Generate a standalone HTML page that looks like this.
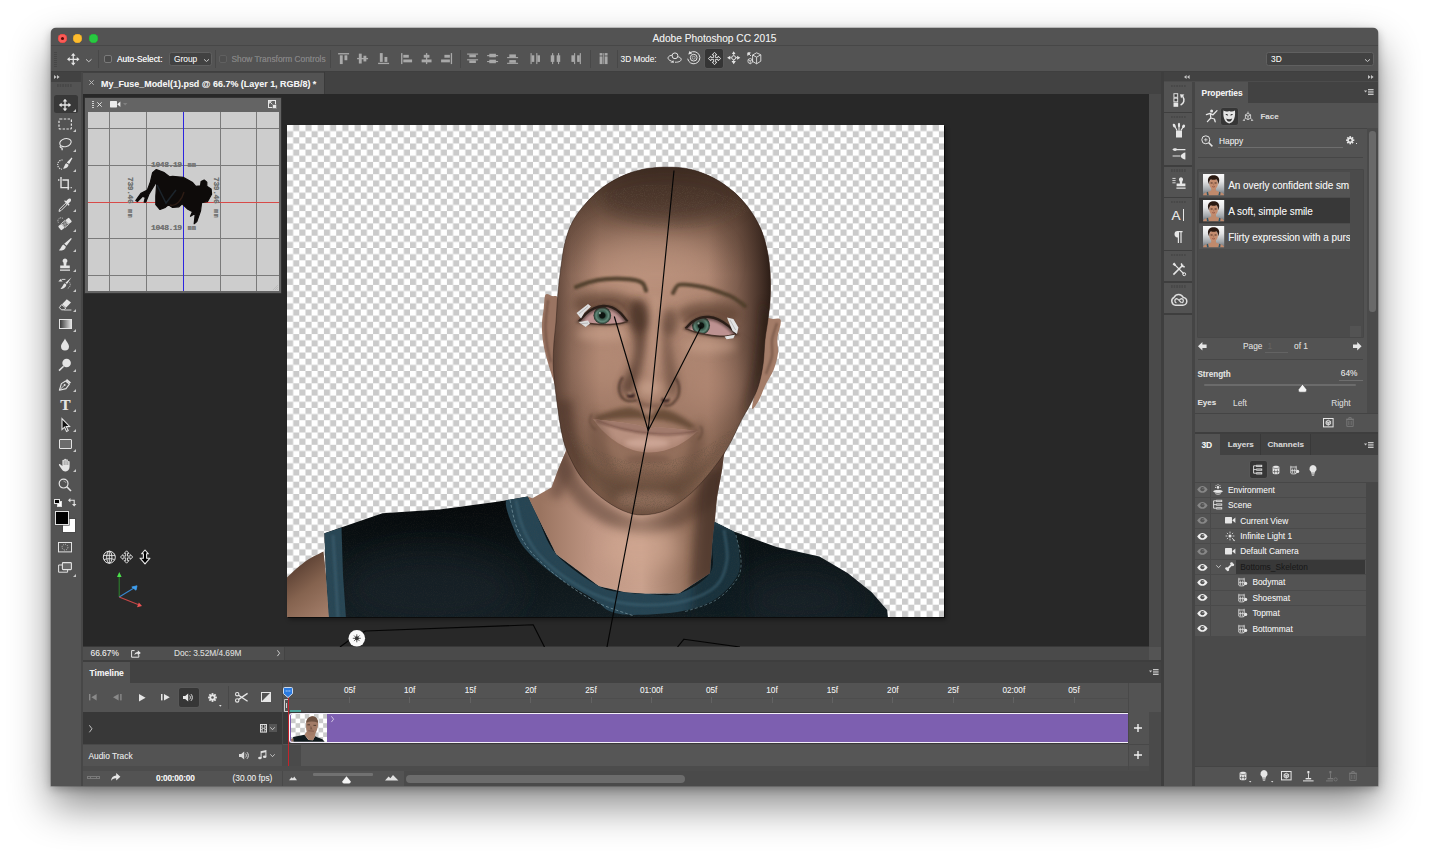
<!DOCTYPE html>
<html lang="en">
<head>
<meta charset="utf-8">
<title>Adobe Photoshop CC 2015</title>
<style>
*{box-sizing:border-box;margin:0;padding:0}
html,body{width:1429px;height:855px;overflow:hidden;background:#fff}
body{position:relative;font-family:"Liberation Sans","DejaVu Sans",sans-serif;font-size:8.5px;color:#e6e6e6}
.win *{position:absolute}
.win{position:absolute;left:51px;top:28px;width:1327px;height:758px;background:#535353;border-radius:5px 5px 0 0;box-shadow:0 20px 40px 0 rgba(0,0,0,.46),0 3px 10px 0 rgba(0,0,0,.28),0 0 0 .5px rgba(0,0,0,.35)}
.clip{left:0;top:0;width:1327px;height:758px;border-radius:5px 5px 0 0;overflow:hidden}
.s{left:-51px;top:-28px;width:1429px;height:855px}
.t{white-space:nowrap;line-height:10px;height:10px;text-shadow:0 0 .45px rgba(255,255,255,.4)}
.b{font-weight:bold}
.dim{color:#7d7d7d}
svg{overflow:visible}
.r{background:#c9c9c9}
.d{background:#383838}
.tl{width:9.4px;height:9.4px;border-radius:50%;top:33.8px}
.vd{width:1px;background:#484848;top:50px;height:18px}
</style>
</head>
<body>
<div class="win">
<div class="clip">
<div class="s">
<!-- TITLE -->
<div style="left:51px;top:28px;width:1327px;height:17px;background:#535353"></div>
<div class="tl" style="left:57.8px;background:#fc5b57;box-shadow:inset 0 0 0 .5px #e2463f"></div>
<div style="left:61px;top:37px;width:3px;height:3px;border-radius:50%;background:#5a0a08"></div>
<div class="tl" style="left:73px;background:#fdbc2e;box-shadow:inset 0 0 0 .5px #e0a123"></div>
<div class="tl" style="left:88.5px;background:#28c941;box-shadow:inset 0 0 0 .5px #1fb033"></div>
<div class="t" style="left:51px;width:1327px;text-align:center;top:34px;font-size:10.2px;color:#ececec">Adobe Photoshop CC 2015</div>
<!-- OPTIONS BAR -->
<div style="left:51px;top:45px;width:1327px;height:1px;background:#474747"></div>
<div id="opt">
<div style="left:54px;top:52px;width:3px;height:15px;background:repeating-linear-gradient(#474747 0 1px,#535353 1px 2px)"></div>
<svg style="left:66.95px;top:53.25px" width="12.5" height="12.5" viewBox="-6 -6 12 12"><g fill="none" stroke="#e6e6e6" stroke-width="1.2"><path d="M-4.6 0H4.6M0 -4.6V4.6"/></g><g fill="#e6e6e6"><path d="M0 -6L2.2 -3.4H-2.2ZM0 6L2.2 3.4H-2.2ZM-6 0L-3.4 -2.2V2.2ZM6 0L3.4 -2.2V2.2Z"/></g></svg>
<svg style="left:86.25px;top:58.925px" width="5.5" height="3.75" viewBox="0 0 5.5 3.75"><path d="M0 0.3L2.75 2.75L5.5 0.3" fill="none" stroke="#c8c8c8" stroke-width="1"/></svg>
<div class="vd" style="left:98px"></div>
<div style="left:104px;top:55px;width:8px;height:8px;border:1px solid #7a7a7a;border-radius:2px;background:#4a4a4a"></div>
<div class="t" style="left:117px;top:54px;font-size:8.35px;color:#f0f0f0;text-shadow:0 0 .3px #f0f0f0">Auto-Select:</div>
<div style="left:168.5px;top:52px;width:43px;height:14px;background:#424242;border:1px solid #606060;border-radius:2.5px"></div>
<div class="t" style="left:174px;top:54px;font-size:8.35px;color:#f0f0f0">Group</div>
<svg style="left:203.5px;top:58.55px" width="5" height="3.5" viewBox="0 0 5 3.5"><path d="M0 0.3L2.5 2.5L5 0.3" fill="none" stroke="#c8c8c8" stroke-width="1"/></svg>
<div class="vd" style="left:215px"></div>
<div style="left:218.5px;top:55px;width:8px;height:8px;border:1px solid #606060;border-radius:2px;background:#4f4f4f"></div>
<div class="t" style="left:231.5px;top:54px;font-size:8.35px;color:#7c7c7c">Show Transform Controls</div>
<div class="vd" style="left:330px"></div>
<svg style="left:337.4px;top:52.0px" width="13.200000000000001" height="13.200000000000001" viewBox="-6.0 -6.0 12 12" fill="#a9a9a9"><rect x="-5" y="-5" width="10" height="1.2"/><rect x="-3.4" y="-3" width="2.6" height="8"/><rect x="0.8" y="-3" width="2.6" height="4.5"/></svg>
<svg style="left:356.4px;top:52.0px" width="13.200000000000001" height="13.200000000000001" viewBox="-6.0 -6.0 12 12" fill="#a9a9a9"><rect x="-5" y="-0.6" width="10" height="1.2"/><rect x="-3.4" y="-4.5" width="2.6" height="9"/><rect x="0.8" y="-2.6" width="2.6" height="5.2"/></svg>
<svg style="left:376.9px;top:52.0px" width="13.200000000000001" height="13.200000000000001" viewBox="-6.0 -6.0 12 12" fill="#a9a9a9"><rect x="-5" y="3.8" width="10" height="1.2"/><rect x="-3.4" y="-5" width="2.6" height="8"/><rect x="0.8" y="-1.5" width="2.6" height="4.5"/></svg>
<svg style="left:400.4px;top:52.0px" width="13.200000000000001" height="13.200000000000001" viewBox="-6.0 -6.0 12 12" fill="#a9a9a9"><rect x="-5" y="-5" width="1.2" height="10"/><rect x="-3" y="-3.4" width="5" height="2.6"/><rect x="-3" y="0.8" width="8" height="2.6"/></svg>
<svg style="left:420.4px;top:52.0px" width="13.200000000000001" height="13.200000000000001" viewBox="-6.0 -6.0 12 12" fill="#a9a9a9"><rect x="-0.6" y="-5" width="1.2" height="10"/><rect x="-2.6" y="-3.4" width="5.2" height="2.6"/><rect x="-4.5" y="0.8" width="9" height="2.6"/></svg>
<svg style="left:440.4px;top:52.0px" width="13.200000000000001" height="13.200000000000001" viewBox="-6.0 -6.0 12 12" fill="#a9a9a9"><rect x="3.8" y="-5" width="1.2" height="10"/><rect x="-2" y="-3.4" width="5" height="2.6"/><rect x="-5" y="0.8" width="8" height="2.6"/></svg>
<div class="vd" style="left:460px"></div>
<svg style="left:466.4px;top:52.0px" width="13.200000000000001" height="13.200000000000001" viewBox="-6.0 -6.0 12 12" fill="#a9a9a9"><rect x="-5" y="-4.6" width="10" height="1"/><rect x="-3" y="-3.6" width="6" height="2.4"/><rect x="-5" y="0.6" width="10" height="1"/><rect x="-3" y="1.6" width="6" height="2.4"/></svg>
<svg style="left:486.4px;top:52.0px" width="13.200000000000001" height="13.200000000000001" viewBox="-6.0 -6.0 12 12" fill="#a9a9a9"><rect x="-5" y="-3.2" width="10" height="1"/><rect x="-3" y="-4.4" width="6" height="3.2"/><rect x="-5" y="2.2" width="10" height="1"/><rect x="-3" y="1" width="6" height="3.2"/></svg>
<svg style="left:506.4px;top:52.0px" width="13.200000000000001" height="13.200000000000001" viewBox="-6.0 -6.0 12 12" fill="#a9a9a9"><rect x="-5" y="-1.4" width="10" height="1"/><rect x="-3" y="-3.8" width="6" height="2.4"/><rect x="-5" y="3.8" width="10" height="1"/><rect x="-3" y="1.4" width="6" height="2.4"/></svg>
<svg style="left:529.4px;top:52.0px" width="13.200000000000001" height="13.200000000000001" viewBox="-6.0 -6.0 12 12" fill="#a9a9a9"><rect x="-4.6" y="-5" width="1" height="10"/><rect x="-3.6" y="-3" width="2.4" height="6"/><rect x="0.6" y="-5" width="1" height="10"/><rect x="1.6" y="-3" width="2.4" height="6"/></svg>
<svg style="left:549.4px;top:52.0px" width="13.200000000000001" height="13.200000000000001" viewBox="-6.0 -6.0 12 12" fill="#a9a9a9"><rect x="-3.2" y="-5" width="1" height="10"/><rect x="-4.4" y="-3" width="3.2" height="6"/><rect x="2.2" y="-5" width="1" height="10"/><rect x="1" y="-3" width="3.2" height="6"/></svg>
<svg style="left:569.4px;top:52.0px" width="13.200000000000001" height="13.200000000000001" viewBox="-6.0 -6.0 12 12" fill="#a9a9a9"><rect x="-1.4" y="-5" width="1" height="10"/><rect x="-3.8" y="-3" width="2.4" height="6"/><rect x="3.8" y="-5" width="1" height="10"/><rect x="1.4" y="-3" width="2.4" height="6"/></svg>
<div class="vd" style="left:590px"></div>
<svg style="left:597.4px;top:52.0px" width="13.200000000000001" height="13.200000000000001" viewBox="-6.0 -6.0 12 12" fill="#a9a9a9"><rect x="-3.6" y="-5" width="2.6" height="2.2"/><rect x="1" y="-5" width="2.6" height="2.2"/><rect x="-3.6" y="-2" width="2.6" height="7"/><rect x="1" y="-2" width="2.6" height="7"/><rect x="-0.5" y="-5" width="1" height="10" opacity=".7"/></svg>
<div class="vd" style="left:617px"></div>
<div class="t" style="left:620.5px;top:54px;font-size:8.35px;color:#f0f0f0">3D Mode:</div>
<svg style="left:666.5px;top:52px" width="15" height="12" viewBox="0 0 15 12" fill="none" stroke="#e2e2e2" stroke-width="1"><circle cx="8" cy="3.8" r="2.9"/><path d="M5.2 3.2C1.5 3.6 0.2 5.6 1.6 7.4C2.4 8.3 3.4 8.9 4.6 9.2M8 10.2C12 10.4 15 8.8 14 6.6C13.6 5.8 12.6 5.2 11.2 4.8"/><path d="M3.4 10.6L6.4 8.2L7 10.8Z" fill="#e2e2e2" stroke="none"/></svg>
<svg style="left:687px;top:51.3px" width="13.4" height="13.4" viewBox="-6.7 -6.7 13.4 13.4" fill="none" stroke="#e2e2e2" stroke-width="1"><circle r="3.4"/><circle r="1.5" stroke-width=".8" opacity=".7"/><path d="M-3.6 -4.9A6.1 6.1 0 1 1 -6 1"/><path d="M-5.4 -3.2L-4.2 -6.6L-1.6 -4.2Z" fill="#e2e2e2" stroke="none"/></svg>
<div style="left:705px;top:49px;width:18px;height:19px;background:#353535;border-radius:2px;box-shadow:0 0 0 .5px #5e5e5e"></div>
<svg style="left:707.5px;top:51.5px" width="13" height="13" viewBox="-6.5 -6.5 13 13" fill="none" stroke="#e2e2e2" stroke-width=".9" stroke-linejoin="round"><path d="M0 -6.2L2.4 -3.6H0.9V-0.9H3.6V-2.4L6.2 0L3.6 2.4V0.9H0.9V3.6H2.4L0 6.2L-2.4 3.6H-0.9V0.9H-3.6V2.4L-6.2 0L-3.6 -2.4V-0.9H-0.9V-3.6H-2.4Z"/></svg>
<svg style="left:727px;top:51.3px" width="13.4" height="13.4" viewBox="-6.7 -6.7 13.4 13.4" fill="#e2e2e2"><circle r="2" fill="none" stroke="#e2e2e2" stroke-width="1"/><path d="M0 -6.4L1.8 -3.6H-1.8ZM0 6.6L2.2 3.4H-2.2ZM-6.6 0L-3.4 -2V2ZM6.6 0L3.4 -2V2Z"/><path d="M0 -3.6V-2.2M0 3.4V2.2M-3.4 0H-2.2M3.4 0H2.2" stroke="#e2e2e2" stroke-width="1"/></svg>
<svg style="left:746.5px;top:51.5px" width="14.5" height="13" viewBox="0 0 14.5 13" fill="none" stroke="#e2e2e2" stroke-width=".9" stroke-linejoin="round"><path d="M9.6 0.8L13.8 2.8V9.2L9.6 11.8L5.6 9.4V3Z"/><path d="M5.6 3L9.6 5.2L13.8 2.8M9.6 5.2V11.8"/><path d="M1 7.6L3.2 6.4L5.4 7.6V10.4L3.2 11.8L1 10.4ZM1 7.6L3.2 8.8L5.4 7.6M3.2 8.8V11.8" stroke-width=".8"/><path d="M1.4 1.4L4 4M0.8 0.8H3.4L0.8 3.4Z" fill="#e2e2e2"/></svg>
<div style="left:1265.5px;top:52px;width:108px;height:14px;background:#424242;border:1px solid #606060;border-radius:2.5px"></div>
<div class="t" style="left:1271px;top:54px;font-size:8.35px;color:#f0f0f0">3D</div>
<svg style="left:1365.0px;top:58.55px" width="5" height="3.5" viewBox="0 0 5 3.5"><path d="M0 0.3L2.5 2.5L5 0.3" fill="none" stroke="#c8c8c8" stroke-width="1"/></svg>
</div>
<!-- TAB ROW / DOC -->
<div style="left:51px;top:71px;width:1327px;height:1px;background:#3f3f3f"></div>
<div style="left:51px;top:72px;width:1327px;height:714px;background:#383838"></div>
<div id="doc">
<div style="left:83px;top:72px;width:1079px;height:22px;background:#424242"></div>
<div style="left:83px;top:73px;width:241px;height:21px;background:#535353"></div>
<div style="left:83px;top:94px;width:1067px;height:552px;background:#282828"></div>
</div>
<!--TOOLS-->
<div id="tools">
<div style="left:51px;top:72px;width:29.5px;height:714px;background:#535353"></div>
<div style="left:80.5px;top:72px;width:2px;height:714px;background:#474747"></div>
<div style="left:51px;top:72px;width:29.5px;height:9.5px;background:#424242"></div>
<svg style="left:53.5px;top:74.5px" width="6" height="4" viewBox="0 0 6 4" fill="#c4c4c4"><path d="M0 0L2.6 2L0 4ZM3 0L5.6 2L3 4Z"/></svg>
<div style="left:57px;top:84px;width:15px;height:3px;background:linear-gradient(90deg,#484848 0 64%,transparent 64%) 0 0/2.6px 100%"></div>
<div style="left:54px;top:95px;width:23.5px;height:17.8px;background:#383838;border-radius:2.5px"></div>
<svg style="left:57.2px;top:96.5px" width="16" height="16" viewBox="-8.0 -8.0 16 16" fill="none" stroke="#e4e4e4" stroke-width="1.1" ><path d="M-4.6 0H4.6M0 -4.6V4.6" stroke-width="1.3"/><path d="M0 -6.2L2.3 -3.4H-2.3ZM0 6.2L2.3 3.4H-2.3ZM-6.2 0L-3.4 -2.3V2.3ZM6.2 0L3.4 -2.3V2.3Z" fill="#e4e4e4" stroke="none"/></svg>
<svg style="left:57.2px;top:115.7px" width="16" height="16" viewBox="-8.0 -8.0 16 16" fill="none" stroke="#e4e4e4" stroke-width="1.1" ><rect x="-6" y="-5" width="12.4" height="10" rx="1" stroke-dasharray="2.4 1.4" stroke-width="1.2"/></svg>
<svg style="left:57.2px;top:136.0px" width="16" height="16" viewBox="-8.0 -8.0 16 16" fill="none" stroke="#e4e4e4" stroke-width="1.1" ><ellipse cx="0.8" cy="-1.2" rx="5.8" ry="4" transform="rotate(-14)"/><path d="M-4.2 1.6C-5.4 2.4 -5 3.6 -3.6 3.8C-2.4 4 -2.6 5.2 -3.2 6.2" stroke-width="1.2"/></svg>
<svg style="left:57.2px;top:156.0px" width="16" height="16" viewBox="-8.0 -8.0 16 16" fill="none" stroke="#e4e4e4" stroke-width="1.1" ><path d="M0.2 -4.6A4.6 4.6 0 1 0 -0.4 4.6" stroke-dasharray="1.2 1" transform="translate(-2.6 0.6)"/><path d="M6.6 -6.6L7.4 -5.8L4.2 0L1.8 -1.6Z M3.6 0.8L1.2 -0.8C-0.4 0.2 -0.6 2.8 -2 4.6C0.8 5 3.4 3.4 3.6 0.8Z" fill="#e4e4e4" stroke="none"/></svg>
<svg style="left:57.2px;top:176.0px" width="16" height="16" viewBox="-8.0 -8.0 16 16" fill="none" stroke="#e4e4e4" stroke-width="1.1" ><path d="M-4 -7V3.6H4.2M-7 -4H-5.6M-2.6 -4H3.2V5.8M5.6 3.6H6.8" stroke-width="1.4"/></svg>
<svg style="left:57.2px;top:196.5px" width="16" height="16" viewBox="-8.0 -8.0 16 16" fill="none" stroke="#e4e4e4" stroke-width="1.1" ><path d="M-6 6.4L-5.4 4.2L0.4 -1.6L1.8 -0.2L-4 5.6Z" stroke-width="1"/><path d="M-0.6 -3.4L3.6 0.8L4.6 -0.2L3.4 -1.4L5.6 -3.6C6.4 -4.6 6.2 -5.6 5.6 -6.2C4.8 -6.8 3.8 -6.6 3.2 -6L1 -3.8L-0.2 -5Z" fill="#e4e4e4" stroke="none"/></svg>
<svg style="left:57.2px;top:216.0px" width="16" height="16" viewBox="-8.0 -8.0 16 16" fill="none" stroke="#e4e4e4" stroke-width="1.1" ><g transform="rotate(-40)"><rect x="-7" y="-2.6" width="4.2" height="5.2" rx="1" fill="#e4e4e4" stroke="none"/><rect x="2.8" y="-2.6" width="4.2" height="5.2" rx="1" fill="#e4e4e4" stroke="none"/><rect x="-2.4" y="-2.6" width="4.8" height="5.2" stroke-width=".9"/><rect x="-1" y="-1" width="2" height="2" stroke-width=".7"/></g><path d="M-6.6 -1.4A3 3 0 0 1 -1.4 -4.8" stroke-dasharray="1 .9" stroke-width=".8"/></svg>
<svg style="left:57.2px;top:236.5px" width="16" height="16" viewBox="-8.0 -8.0 16 16" fill="none" stroke="#e4e4e4" stroke-width="1.1" ><path d="M6 -7L6.8 -6.2L1.6 0.8L-0.8 -1.2Z M0.8 1.4L-1.6 -0.6C-3.6 0.2 -3.6 3.2 -6.2 5.2C-3 6.2 0.8 4.4 0.8 1.4Z" fill="#e4e4e4" stroke="none"/></svg>
<svg style="left:57.2px;top:256.5px" width="16" height="16" viewBox="-8.0 -8.0 16 16" fill="none" stroke="#e4e4e4" stroke-width="1.1" ><path d="M0 -6.6A2.4 2.4 0 0 1 1.6 -2.4L1.2 0.4H4.8V3.2H-4.8V0.4H-1.2L-1.6 -2.4A2.4 2.4 0 0 1 0 -6.6ZM-5 4.4H5V5.8H-5Z" fill="#e4e4e4" stroke="none"/></svg>
<svg style="left:57.2px;top:276.0px" width="16" height="16" viewBox="-8.0 -8.0 16 16" fill="none" stroke="#e4e4e4" stroke-width="1.1" ><path d="M6.4 -6.4L2 0L0.4 -1.2Z M1.4 0.6L-0.4 -0.8C-2 0.2 -2.2 2.8 -4.6 4.8C-1.8 5.4 1.2 3.4 1.4 0.6Z" fill="#e4e4e4" stroke="none"/><path d="M-6.6 -2.6L-4.4 -5L-2.4 -2.6Z" fill="#e4e4e4" stroke="none"/><path d="M-3.4 -4.6H0.4" stroke-width=".9"/><path d="M4.6 -1.6C6 0.8 5 3.6 2 4.8" stroke-dasharray="1 1" stroke-width=".8"/></svg>
<svg style="left:57.2px;top:296.5px" width="16" height="16" viewBox="-8.0 -8.0 16 16" fill="none" stroke="#e4e4e4" stroke-width="1.1" ><path d="M1.8 -5.8L6 -2.4L1.2 2.6L-3 -0.8Z" fill="#e4e4e4" stroke="none"/><path d="M-3.4 -0.4L0.8 3L-1 4.8H-3.6L-5.6 2.6Z" stroke-width="1"/><path d="M-1 5H6.4" stroke-width="1.1" opacity=".8"/></svg>
<div style="left:58.8px;top:318.9px;width:13.2px;height:10.6px;border:1px solid #e4e4e4;background:linear-gradient(90deg,#3a3a3a,#e0e0e0)"></div>
<svg style="left:57.2px;top:336.5px" width="16" height="16" viewBox="-8.0 -8.0 16 16" fill="none" stroke="#e4e4e4" stroke-width="1.1" ><path d="M0 -6.6C1 -3.6 4 -1.6 4 1.6A4 4 0 0 1 -4 1.6C-4 -1.6 -1 -3.6 0 -6.6Z" fill="#e4e4e4" stroke="none"/></svg>
<svg style="left:57.2px;top:356.5px" width="16" height="16" viewBox="-8.0 -8.0 16 16" fill="none" stroke="#e4e4e4" stroke-width="1.1" ><circle cx="1.6" cy="-2" r="4.3" fill="#e4e4e4" stroke="none"/><path d="M-1.4 1.2L-6 5.6" stroke-width="1.5"/></svg>
<svg style="left:57.2px;top:376.5px" width="16" height="16" viewBox="-8.0 -8.0 16 16" fill="none" stroke="#e4e4e4" stroke-width="1.1" ><path d="M2 -6L6 -2.6L4.8 -1.2L0.8 -4.6Z" fill="#e4e4e4" stroke="none"/><path d="M0.6 -4L-3.6 -1.4L-5.6 5.2L1 3.6L4.4 -0.8Z" stroke-width="1.1" stroke-linejoin="round"/><path d="M-5.2 4.8L-0.8 0.4" stroke-width=".9"/><circle cx="-0.4" cy="0" r="1" fill="#e4e4e4" stroke="none"/></svg>
<div class="t" style="left:58.5px;top:396.5px;width:14px;height:16px;line-height:16px;text-align:center;font-family:'Liberation Serif',serif;font-size:15.5px;color:#e4e4e4;font-weight:bold">T</div>
<svg style="left:57.2px;top:416.5px" width="16" height="16" viewBox="-8.0 -8.0 16 16" fill="none" stroke="#e4e4e4" stroke-width="1.1" ><path d="M-3 -6.4V4.6L-0.4 2.2L1.6 6.4L3.2 5.6L1.2 1.6L4.6 1.4Z" fill="#111" stroke="#e4e4e4" stroke-width="1.1" stroke-linejoin="miter"/></svg>
<div style="left:58.8px;top:438.7px;width:13.4px;height:10.8px;border:1.2px solid #e4e4e4;background:#6c6c6c;border-radius:1px"></div>
<svg style="left:57.2px;top:456.5px" width="16" height="16" viewBox="-8.0 -8.0 16 16" fill="none" stroke="#e4e4e4" stroke-width="1.1" ><path d="M-2.6 1V-4.4A.9 .9 0 0 1 -0.8 -4.4V-5.4A.9 .9 0 0 1 1 -5.4V-4.8A.9 .9 0 0 1 2.8 -4.8V-3.2A.9 .9 0 0 1 4.6 -3.2V1.6C4.6 4.6 3 6.4 0.6 6.4C-1.6 6.4 -2.6 5.4 -3.8 3.4L-6 0.2C-6.4 -0.6 -5.4 -1.4 -4.6 -0.6Z" fill="#e4e4e4" stroke="none"/><path d="M-0.8 -4.4V0M1 -4.8V0M2.8 -3.4V0" stroke="#535353" stroke-width=".5"/></svg>
<svg style="left:57.2px;top:476.5px" width="16" height="16" viewBox="-8.0 -8.0 16 16" fill="none" stroke="#e4e4e4" stroke-width="1.1" ><circle cx="-1.4" cy="-1.4" r="4.4" stroke-width="1.2"/><path d="M1.8 1.8L6 6" stroke-width="1.6"/><path d="M-1.6 -4A2.6 2.6 0 0 1 1 -2" stroke-width=".7" opacity=".7"/></svg>
<svg style="left:73px;top:108.7px" width="3" height="3" viewBox="0 0 3 3"><path d="M3 0V3H0Z" fill="#c8c8c8"/></svg>
<svg style="left:73px;top:128.7px" width="3" height="3" viewBox="0 0 3 3"><path d="M3 0V3H0Z" fill="#c8c8c8"/></svg>
<svg style="left:73px;top:148.7px" width="3" height="3" viewBox="0 0 3 3"><path d="M3 0V3H0Z" fill="#c8c8c8"/></svg>
<svg style="left:73px;top:168.7px" width="3" height="3" viewBox="0 0 3 3"><path d="M3 0V3H0Z" fill="#c8c8c8"/></svg>
<svg style="left:73px;top:188.7px" width="3" height="3" viewBox="0 0 3 3"><path d="M3 0V3H0Z" fill="#c8c8c8"/></svg>
<svg style="left:73px;top:208.7px" width="3" height="3" viewBox="0 0 3 3"><path d="M3 0V3H0Z" fill="#c8c8c8"/></svg>
<svg style="left:73px;top:228.7px" width="3" height="3" viewBox="0 0 3 3"><path d="M3 0V3H0Z" fill="#c8c8c8"/></svg>
<svg style="left:73px;top:248.7px" width="3" height="3" viewBox="0 0 3 3"><path d="M3 0V3H0Z" fill="#c8c8c8"/></svg>
<svg style="left:73px;top:268.7px" width="3" height="3" viewBox="0 0 3 3"><path d="M3 0V3H0Z" fill="#c8c8c8"/></svg>
<svg style="left:73px;top:288.7px" width="3" height="3" viewBox="0 0 3 3"><path d="M3 0V3H0Z" fill="#c8c8c8"/></svg>
<svg style="left:73px;top:308.7px" width="3" height="3" viewBox="0 0 3 3"><path d="M3 0V3H0Z" fill="#c8c8c8"/></svg>
<svg style="left:73px;top:328.7px" width="3" height="3" viewBox="0 0 3 3"><path d="M3 0V3H0Z" fill="#c8c8c8"/></svg>
<svg style="left:73px;top:348.7px" width="3" height="3" viewBox="0 0 3 3"><path d="M3 0V3H0Z" fill="#c8c8c8"/></svg>
<svg style="left:73px;top:368.7px" width="3" height="3" viewBox="0 0 3 3"><path d="M3 0V3H0Z" fill="#c8c8c8"/></svg>
<svg style="left:73px;top:388.7px" width="3" height="3" viewBox="0 0 3 3"><path d="M3 0V3H0Z" fill="#c8c8c8"/></svg>
<svg style="left:73px;top:408.7px" width="3" height="3" viewBox="0 0 3 3"><path d="M3 0V3H0Z" fill="#c8c8c8"/></svg>
<svg style="left:73px;top:428.7px" width="3" height="3" viewBox="0 0 3 3"><path d="M3 0V3H0Z" fill="#c8c8c8"/></svg>
<svg style="left:73px;top:448.7px" width="3" height="3" viewBox="0 0 3 3"><path d="M3 0V3H0Z" fill="#c8c8c8"/></svg>
<svg style="left:73px;top:468.7px" width="3" height="3" viewBox="0 0 3 3"><path d="M3 0V3H0Z" fill="#c8c8c8"/></svg>
<div style="left:56.5px;top:501px;width:5.5px;height:5.5px;background:#fff;border:.5px solid #ddd"></div>
<div style="left:54px;top:498.5px;width:5.5px;height:5.5px;background:#000;border:1px solid #e4e4e4"></div>
<svg style="left:68px;top:498px" width="8.5" height="8.5" viewBox="0 0 8.5 8.5" fill="#e4e4e4"><path d="M0 2.2L2.4 0V4.4Z M6.2 8.5L4 6.1H8.4Z"/><path d="M2 2.2H6.2V6.4" fill="none" stroke="#e4e4e4" stroke-width="1.1"/></svg>
<div style="left:62px;top:518.3px;width:14.3px;height:14.6px;background:#fff;border:.6px solid #4a4a4a"></div>
<div style="left:54.6px;top:511px;width:14.4px;height:14.2px;background:#000;border:1px solid #e0e0e0;box-shadow:0 0 0 .6px #4a4a4a"></div>
<svg style="left:58.2px;top:542px" width="14" height="10.4" viewBox="0 0 14 10.4" fill="none" stroke="#e4e4e4"><rect x=".5" y=".5" width="13" height="9.4" stroke-width="1"/><circle cx="7" cy="5.2" r="2.9" stroke-dasharray="1.2 1" stroke-width=".8" opacity=".8"/></svg>
<svg style="left:58.2px;top:561.6px" width="14" height="10.8" viewBox="0 0 14 10.8" fill="none" stroke="#e4e4e4"><path d="M4 3H.6V10.2H9.6V8" stroke-width="1"/><rect x="4.4" y=".6" width="9" height="7" rx=".8" stroke-width="1.1" fill="#6a6a6a"/></svg>
<svg style="left:73px;top:573.7px" width="3" height="3" viewBox="0 0 3 3"><path d="M3 0V3H0Z" fill="#c8c8c8"/></svg>
</div>
<!--/TOOLS-->
<!--CANVAS-->
<div id="canvas" style="left:287px;top:125px;width:657px;height:492px;background:#fff;box-shadow:1px 1px 0 #0c0c0c,2px 3px 4px rgba(0,0,0,.35);overflow:hidden">
<!--FACE-->
<svg id="face" style="left:0;top:0" width="657" height="492" viewBox="287 125 657 492">
<defs>
<pattern id="chk" x="287" y="125" width="12.3" height="12.3" patternUnits="userSpaceOnUse"><rect width="12.3" height="12.3" fill="#fff"/><rect x="6.15" width="6.15" height="6.15" fill="#cbcbcb"/><rect y="6.15" width="6.15" height="6.15" fill="#cbcbcb"/></pattern>
<radialGradient id="gHead" gradientUnits="userSpaceOnUse" cx="648" cy="320" r="190" fx="640" fy="290">
<stop offset="0" stop-color="#b78e79"/><stop offset=".35" stop-color="#ad8571"/><stop offset=".65" stop-color="#9d7764"/><stop offset=".88" stop-color="#886652"/><stop offset="1" stop-color="#705241"/></radialGradient>
<linearGradient id="gTop" gradientUnits="userSpaceOnUse" x1="0" y1="165" x2="0" y2="275"><stop offset="0" stop-color="#32231a" stop-opacity=".92"/><stop offset=".3" stop-color="#423024" stop-opacity=".68"/><stop offset=".6" stop-color="#4a3528" stop-opacity=".36"/><stop offset="1" stop-color="#4a3528" stop-opacity="0"/></linearGradient>
<linearGradient id="gRight" gradientUnits="userSpaceOnUse" x1="708" y1="0" x2="772" y2="0"><stop offset="0" stop-color="#3a271e" stop-opacity="0"/><stop offset=".45" stop-color="#3a271e" stop-opacity=".36"/><stop offset=".8" stop-color="#2f1f18" stop-opacity=".76"/><stop offset="1" stop-color="#22150f" stop-opacity=".95"/></linearGradient>
<linearGradient id="gLeft" gradientUnits="userSpaceOnUse" x1="552" y1="0" x2="600" y2="0"><stop offset="0" stop-color="#3a271e" stop-opacity=".7"/><stop offset=".4" stop-color="#3a271e" stop-opacity=".3"/><stop offset="1" stop-color="#3a271e" stop-opacity="0"/></linearGradient>
<linearGradient id="gNeck" gradientUnits="userSpaceOnUse" x1="540" y1="0" x2="725" y2="0"><stop offset="0" stop-color="#9a7460"/><stop offset=".3" stop-color="#c09784"/><stop offset=".55" stop-color="#caa28e"/><stop offset=".8" stop-color="#94705c"/><stop offset="1" stop-color="#553c30"/></linearGradient>
<linearGradient id="gShirt" gradientUnits="userSpaceOnUse" x1="0" y1="500" x2="0" y2="617"><stop offset="0" stop-color="#05080a"/><stop offset=".45" stop-color="#0c1417"/><stop offset="1" stop-color="#121d22"/></linearGradient>
<linearGradient id="gArm" gradientUnits="userSpaceOnUse" x1="287" y1="560" x2="330" y2="617"><stop offset="0" stop-color="#4e352a"/><stop offset=".5" stop-color="#85634f"/><stop offset="1" stop-color="#a6806c"/></linearGradient>
<radialGradient id="gIris"><stop offset="0" stop-color="#0d120f"/><stop offset=".3" stop-color="#0d120f"/><stop offset=".42" stop-color="#365648"/><stop offset=".72" stop-color="#62897a"/><stop offset=".9" stop-color="#364e42"/><stop offset="1" stop-color="#1e2b24"/></radialGradient>
<filter id="b1" filterUnits="userSpaceOnUse" x="287" y="125" width="657" height="492"><feGaussianBlur stdDeviation="1"/></filter>
<filter id="b2" filterUnits="userSpaceOnUse" x="287" y="125" width="657" height="492"><feGaussianBlur stdDeviation="2.2"/></filter>
<filter id="b4" filterUnits="userSpaceOnUse" x="287" y="125" width="657" height="492"><feGaussianBlur stdDeviation="4.5"/></filter>
<filter id="b8" filterUnits="userSpaceOnUse" x="287" y="125" width="657" height="492"><feGaussianBlur stdDeviation="9"/></filter>
<filter id="b14" filterUnits="userSpaceOnUse" x="287" y="125" width="657" height="492"><feGaussianBlur stdDeviation="15"/></filter>
<filter id="noise" x="0" y="0" width="100%" height="100%"><feTurbulence type="fractalNoise" baseFrequency="0.9" numOctaves="2" seed="3" result="n"/><feColorMatrix in="n" type="matrix" values="0 0 0 0 0.13  0 0 0 0 0.09  0 0 0 0 0.06  0 0 0 2.2 -0.95"/><feComposite in2="SourceGraphic" operator="in"/></filter>

<clipPath id="cHead"><path d="M672.3 167.2C679.7 167.4 685.0 167.9 692.0 169.7C699.0 171.5 707.0 174.5 714.0 178.2C721.0 181.9 728.0 186.9 733.7 191.8C739.4 196.7 744.1 202.0 748.4 207.7C752.7 213.4 756.6 220.2 759.5 226.1C762.4 232.0 764.0 237.2 765.6 243.3C767.2 249.5 768.5 256.4 769.3 263.0C770.1 269.6 770.4 276.1 770.5 282.6C770.6 289.2 770.4 296.2 770.0 302.3C769.6 308.4 768.8 313.2 768.0 319.5C767.2 325.8 765.8 332.6 765.0 340.0C764.2 347.4 764.2 356.2 763.1 364.0C762.0 371.8 760.4 379.8 758.2 386.6C756.0 393.4 752.9 399.3 750.0 405.0C747.1 410.7 744.5 414.2 741.0 421.0C737.5 427.8 733.3 437.8 728.8 445.6C724.3 453.4 720.1 459.9 714.0 467.7C707.9 475.5 699.8 485.3 692.0 492.3C684.2 499.3 675.6 505.7 667.4 509.5C659.2 513.3 650.2 514.7 642.8 514.9C635.4 515.1 630.2 513.6 623.2 510.7C616.2 507.8 608.0 502.7 601.0 497.2C594.0 491.7 587.0 485.1 581.4 477.6C575.8 470.1 570.8 459.4 567.5 452.0C564.2 444.6 563.5 441.3 561.8 433.3C560.1 425.3 558.4 412.3 557.2 403.9C556.0 395.5 555.3 389.6 554.6 383.0C553.9 376.4 553.3 370.7 553.2 364.0C553.1 357.3 553.4 350.0 553.9 343.0C554.4 336.0 555.4 329.4 556.0 322.0C556.6 314.6 557.0 305.6 557.5 298.6C558.0 291.6 558.6 286.6 559.3 280.2C560.0 273.8 560.8 267.1 561.8 260.5C562.8 253.9 563.6 247.5 565.4 240.9C567.2 234.3 569.3 227.5 572.8 221.2C576.3 214.8 581.2 208.5 586.3 202.8C591.4 197.1 597.0 191.5 603.5 186.8C610.0 182.1 618.2 177.7 625.6 174.6C633.0 171.5 639.9 169.6 647.7 168.4C655.5 167.2 664.9 167.0 672.3 167.2Z"/></clipPath>
<clipPath id="cNeck"><path d="M570.0 440.0L565.5 452.0L558.0 470.0L551.5 487.6L532.4 498.3L527.7 496.6L537.2 516.1L556.2 554.2L599.0 586.3L625.0 592.3L645.7 593.8L679.0 593.5L710.0 573.2L712.3 544.7L714.7 522.0L717.0 497.1L722.0 470.0L724.0 455.0L728.0 440.0Z"/></clipPath>
<clipPath id="cShirt"><path d="M527.7 496.6L499.1 501.4L439.7 509.5L382.5 513.3L324.3 533.3L326.0 575.0L329.0 618.0L888.0 618.0L887.2 610.0L871.7 592.3L847.9 573.2L819.4 556.6L776.5 547.0L733.7 531.6L714.7 522.0L712.3 544.7L710.0 573.2L679.0 593.5L645.7 593.8L625.0 592.3L599.0 586.3L556.2 554.2L537.2 516.1Z"/></clipPath>
</defs>
<rect x="287" y="125" width="657" height="492" fill="url(#chk)"/>
<path d="M287.0 577.5C288.5 576.1 292.3 572.1 296.0 569.0C299.7 565.9 304.4 561.9 309.0 559.0C313.6 556.1 321.1 552.8 323.5 551.5L326 575L329 618L287 618Z" fill="url(#gArm)"/>
<path d="M570.0 440.0L565.5 452.0L558.0 470.0L551.5 487.6L532.4 498.3L527.7 496.6L537.2 516.1L556.2 554.2L599.0 586.3L625.0 592.3L645.7 593.8L679.0 593.5L710.0 573.2L712.3 544.7L714.7 522.0L717.0 497.1L722.0 470.0L724.0 455.0L728.0 440.0Z" fill="url(#gNeck)"/>
<g clip-path="url(#cNeck)">
<path d="M560.0 440.0C564.3 441.7 574.2 470.0 581.0 480.0C587.8 490.0 594.0 494.3 601.0 500.0C608.0 505.7 616.0 510.8 623.0 514.0C630.0 517.2 635.7 519.2 643.0 519.0C650.3 518.8 658.8 516.8 667.0 513.0C675.2 509.2 683.8 503.2 692.0 496.0C700.2 488.8 708.0 479.3 716.0 470.0C724.0 460.7 735.2 440.0 740.0 440.0C744.8 440.0 751.7 457.5 745.0 470.0C738.3 482.5 716.7 504.2 700.0 515.0C683.3 525.8 663.3 535.0 645.0 535.0C626.7 535.0 605.0 525.8 590.0 515.0C575.0 504.2 560.0 482.5 555.0 470.0C550.0 457.5 555.7 438.3 560.0 440.0Z" fill="#4a3226" opacity=".48" filter="url(#b4)"/>
<ellipse cx="640" cy="548" rx="38" ry="22" fill="#d2a892" opacity=".55" filter="url(#b8)"/>
<path d="M700 470L722 470L716 575L690 590Z" fill="#3d2a21" opacity=".55" filter="url(#b4)"/>
<path d="M563 440L575 470L560 500L548 495Z" fill="#5a4034" opacity=".5" filter="url(#b4)"/>
</g>
<path d="M527.7 496.6L499.1 501.4L439.7 509.5L382.5 513.3L324.3 533.3L326.0 575.0L329.0 618.0L888.0 618.0L887.2 610.0L871.7 592.3L847.9 573.2L819.4 556.6L776.5 547.0L733.7 531.6L714.7 522.0L712.3 544.7L710.0 573.2L679.0 593.5L645.7 593.8L625.0 592.3L599.0 586.3L556.2 554.2L537.2 516.1Z" fill="url(#gShirt)"/>
<g clip-path="url(#cShirt)">
<ellipse cx="430" cy="590" rx="90" ry="40" fill="#1a282e" opacity=".5" filter="url(#b14)"/>
<ellipse cx="800" cy="600" rx="60" ry="30" fill="#1a282e" opacity=".5" filter="url(#b14)"/>
<path d="M324.3 533.3L341.5 527.5L343.0 575.0L346.0 618.0L329.0 618.0L326.0 575.0Z" fill="#284756"/>
<path d="M333 535L335.5 575L338 618" stroke="#3f6475" stroke-width="3" fill="none" opacity=".6" filter="url(#b1)"/>
<path d="M527.7 496.6C532.9 499.4 532.5 506.5 537.2 516.1C542.0 525.7 545.9 542.5 556.2 554.2C566.5 565.9 587.5 579.9 599.0 586.3C610.5 592.6 617.2 591.0 625.0 592.3C632.8 593.5 636.7 593.6 645.7 593.8C654.7 594.0 668.3 596.9 679.0 593.5C689.7 590.1 704.5 581.3 710.0 573.2C715.5 565.1 711.5 553.2 712.3 544.7C713.1 536.2 711.1 524.2 714.7 522.0C718.3 519.8 729.5 525.4 733.7 531.6C737.9 537.8 739.3 551.3 739.7 559.0C740.1 566.7 740.3 571.3 736.1 578.0C731.9 584.7 723.8 593.9 714.7 599.4C705.6 604.9 694.9 608.7 681.4 611.3C667.9 613.9 645.7 614.9 633.8 614.9C621.9 614.9 616.6 613.9 610.0 611.3C603.4 608.7 602.9 604.9 594.3 599.4C585.7 593.9 569.7 585.9 558.6 578.0C547.5 570.1 535.2 560.1 527.7 551.8C520.2 543.5 517.0 536.7 513.4 528.0C509.8 519.3 503.9 504.7 506.3 499.5C508.7 494.3 522.6 493.8 527.7 496.6Z" fill="#264554"/>
<path d="M700 520L745 530L745 620L690 620Z" fill="#0e1a20" opacity=".45" filter="url(#b4)"/>
<path d="M516.0 500.0C517.2 504.7 519.0 518.7 523.0 528.0C527.0 537.3 531.3 546.7 540.0 556.0C548.7 565.3 563.3 576.7 575.0 584.0C586.7 591.3 598.3 596.5 610.0 600.0C621.7 603.5 632.5 604.8 645.0 605.0C657.5 605.2 673.2 604.2 685.0 601.0C696.8 597.8 709.0 592.8 716.0 586.0C723.0 579.2 725.7 569.3 727.0 560.0C728.3 550.7 724.5 535.0 724.0 530.0" stroke="#3d6374" stroke-width="3" fill="none" opacity=".6" filter="url(#b1)"/>
<path d="M510.0 500.0C511.2 504.7 513.3 519.2 517.0 528.0C520.7 536.8 524.5 544.3 532.0 553.0C539.5 561.7 551.3 571.8 562.0 580.0C572.7 588.2 584.0 596.0 596.0 602.0C608.0 608.0 627.7 613.7 634.0 616.0" stroke="#7fa0ac" stroke-width=".9" stroke-dasharray="3 2" fill="none" opacity=".75"/>
<path d="M736.0 535.0C736.8 539.2 740.8 552.7 741.0 560.0C741.2 567.3 741.2 572.3 737.0 579.0C732.8 585.7 724.8 594.5 716.0 600.0C707.2 605.5 689.3 610.0 684.0 612.0" stroke="#7fa0ac" stroke-width=".9" stroke-dasharray="3 2" fill="none" opacity=".6"/>
<path d="M527.7 496.6L499.1 501.4L439.7 509.5L382.5 513.3L324.3 533.3L326.0 575.0L329.0 618.0L888.0 618.0L887.2 610.0L871.7 592.3L847.9 573.2L819.4 556.6L776.5 547.0L733.7 531.6L714.7 522.0L712.3 544.7L710.0 573.2L679.0 593.5L645.7 593.8L625.0 592.3L599.0 586.3L556.2 554.2L537.2 516.1Z" fill="#000" filter="url(#noise)" opacity=".12"/>
</g>
<path d="M545.6 294.6C547.0 292.6 549.9 295.3 552.0 296.0C554.1 296.7 557.2 294.2 558.0 299.0C558.8 303.8 557.5 316.5 557.0 325.0C556.5 333.5 555.2 340.3 555.0 350.0C554.8 359.7 555.9 378.5 555.5 383.0C555.1 387.5 553.8 380.5 552.5 376.9C551.2 373.3 549.1 367.1 547.6 361.5C546.1 355.9 544.2 349.3 543.3 343.2C542.3 337.1 541.8 330.8 541.9 324.9C542.0 319.0 543.2 313.2 543.8 308.1C544.4 303.1 544.2 296.6 545.6 294.6Z" fill="#9a7462"/>
<path d="M548.0 300.0C547.6 304.2 545.7 317.5 545.5 325.0C545.3 332.5 546.1 338.8 547.0 345.0C547.9 351.2 550.3 359.2 551.0 362.0" stroke="#5a3d31" stroke-width="1.6" fill="none" opacity=".7" filter="url(#b1)"/>
<path d="M766.0 321.0C767.7 315.8 770.7 319.3 773.0 319.0C775.3 318.7 778.5 318.2 779.8 319.0C781.1 319.8 781.0 320.7 780.6 324.0C780.2 327.3 777.8 334.2 777.4 339.0C777.0 343.8 778.6 347.8 778.0 353.0C777.4 358.2 775.7 364.7 773.6 370.0C771.5 375.3 768.0 379.8 765.5 385.0C763.0 390.2 760.8 397.2 758.5 401.0C756.2 404.8 752.1 411.5 752.0 408.0C751.9 404.5 756.2 389.7 758.0 380.0C759.8 370.3 761.7 359.8 763.0 350.0C764.3 340.2 764.3 326.2 766.0 321.0Z" fill="#a37c68"/>
<path d="M777.0 323.0C776.2 325.8 772.8 334.5 772.0 340.0C771.2 345.5 773.0 350.3 772.0 356.0C771.0 361.7 767.0 371.0 766.0 374.0" stroke="#553a2e" stroke-width="1.6" fill="none" opacity=".7" filter="url(#b1)"/>
<path d="M672.3 167.2C679.7 167.4 685.0 167.9 692.0 169.7C699.0 171.5 707.0 174.5 714.0 178.2C721.0 181.9 728.0 186.9 733.7 191.8C739.4 196.7 744.1 202.0 748.4 207.7C752.7 213.4 756.6 220.2 759.5 226.1C762.4 232.0 764.0 237.2 765.6 243.3C767.2 249.5 768.5 256.4 769.3 263.0C770.1 269.6 770.4 276.1 770.5 282.6C770.6 289.2 770.4 296.2 770.0 302.3C769.6 308.4 768.8 313.2 768.0 319.5C767.2 325.8 765.8 332.6 765.0 340.0C764.2 347.4 764.2 356.2 763.1 364.0C762.0 371.8 760.4 379.8 758.2 386.6C756.0 393.4 752.9 399.3 750.0 405.0C747.1 410.7 744.5 414.2 741.0 421.0C737.5 427.8 733.3 437.8 728.8 445.6C724.3 453.4 720.1 459.9 714.0 467.7C707.9 475.5 699.8 485.3 692.0 492.3C684.2 499.3 675.6 505.7 667.4 509.5C659.2 513.3 650.2 514.7 642.8 514.9C635.4 515.1 630.2 513.6 623.2 510.7C616.2 507.8 608.0 502.7 601.0 497.2C594.0 491.7 587.0 485.1 581.4 477.6C575.8 470.1 570.8 459.4 567.5 452.0C564.2 444.6 563.5 441.3 561.8 433.3C560.1 425.3 558.4 412.3 557.2 403.9C556.0 395.5 555.3 389.6 554.6 383.0C553.9 376.4 553.3 370.7 553.2 364.0C553.1 357.3 553.4 350.0 553.9 343.0C554.4 336.0 555.4 329.4 556.0 322.0C556.6 314.6 557.0 305.6 557.5 298.6C558.0 291.6 558.6 286.6 559.3 280.2C560.0 273.8 560.8 267.1 561.8 260.5C562.8 253.9 563.6 247.5 565.4 240.9C567.2 234.3 569.3 227.5 572.8 221.2C576.3 214.8 581.2 208.5 586.3 202.8C591.4 197.1 597.0 191.5 603.5 186.8C610.0 182.1 618.2 177.7 625.6 174.6C633.0 171.5 639.9 169.6 647.7 168.4C655.5 167.2 664.9 167.0 672.3 167.2Z" fill="url(#gHead)"/>
<g clip-path="url(#cHead)">
<rect x="540" y="160" width="240" height="125" fill="url(#gTop)"/>
<rect x="690" y="160" width="90" height="360" fill="url(#gRight)"/>
<rect x="545" y="160" width="60" height="360" fill="url(#gLeft)"/>
<ellipse cx="655" cy="262" rx="62" ry="26" fill="#c39a84" opacity=".55" filter="url(#b14)"/>
<ellipse cx="602" cy="368" rx="24" ry="28" fill="#bd937d" opacity=".4" filter="url(#b14)"/>
<ellipse cx="712" cy="385" rx="24" ry="30" fill="#bd937d" opacity=".5" filter="url(#b14)"/>
<ellipse cx="668" cy="196" rx="70" ry="26" fill="#3d2c21" opacity=".55" filter="url(#b8)"/>
<ellipse cx="604" cy="304" rx="31" ry="12" fill="#553a2c" opacity=".6" filter="url(#b4)"/>
<ellipse cx="709" cy="314" rx="31" ry="12" fill="#553a2c" opacity=".6" filter="url(#b4)"/>
<ellipse cx="603" cy="334" rx="26" ry="7" fill="#c9a18c" opacity=".6" filter="url(#b4)"/>
<ellipse cx="710" cy="346" rx="26" ry="7" fill="#c9a18c" opacity=".6" filter="url(#b4)"/>
<path d="M628 318C632 326 636 340 634 356C630 372 622 380 620 390C624 396 630 396 634 390C640 376 646 350 648 322C646 310 640 300 636 298C630 304 628 310 628 318Z" fill="#4a3025" opacity=".72" filter="url(#b4)"/>
<ellipse cx="640" cy="316" rx="10" ry="16" fill="#452d22" opacity=".6" filter="url(#b4)"/><ellipse cx="670" cy="322" rx="8" ry="14" fill="#452d22" opacity=".5" filter="url(#b4)"/>
<path d="M668 318C670 340 674 360 678 380C680 392 676 398 670 396C664 380 662 350 664 322Z" fill="#553a2d" opacity=".55" filter="url(#b4)"/>
<path d="M656 296L652 378" stroke="#c8a08a" stroke-width="8" opacity=".55" filter="url(#b4)" fill="none"/>
<ellipse cx="650" cy="388" rx="12" ry="9" fill="#c9a28d" opacity=".75" filter="url(#b4)"/>
<path d="M623 377C617 384 618 396 625 400C630 402 634 401 637 400" stroke="#3f2a20" stroke-width="2.2" fill="none" opacity=".75" filter="url(#b1)"/>
<path d="M675.5 378C681 385 680 396 675 401C672 405 668 406.5 664 405" stroke="#3f2a20" stroke-width="2.2" fill="none" opacity=".7" filter="url(#b1)"/>
<path d="M637 400C641 405 648 407 654 406C658 406 661 405 664 404" stroke="#4a3025" stroke-width="2.4" fill="none" opacity=".6" filter="url(#b2)"/>
<ellipse cx="631" cy="395.5" rx="4.2" ry="2.6" fill="#2a1912" opacity=".8" filter="url(#b1)"/>
<ellipse cx="665.5" cy="400" rx="4.2" ry="2.6" fill="#2a1912" opacity=".8" filter="url(#b1)"/>
<ellipse cx="630" cy="393.4" rx="2.6" ry="1" fill="#d8b29c" opacity=".8" filter="url(#b1)"/>
<ellipse cx="666" cy="398" rx="2.6" ry="1" fill="#d8b29c" opacity=".8" filter="url(#b1)"/>
<path d="M594 417C606 412 618 408 630 407L640 410L648 414L656 410L664 409C676 412 688 420 696 427L690 429C678 424 664 419 650 420C634 417 612 419 598 421Z" fill="#46301f" opacity=".6" filter="url(#b2)"/>
<ellipse cx="648" cy="412" rx="6" ry="4" fill="#b89280" opacity=".6" filter="url(#b2)"/>
<path d="M593 419C608 421 628 423 640 425.5L648.6 429L657 427C670 428 686 430 698 431C688 440 672 452.5 648.6 452.5C628 452.5 606 438 593 419Z" fill="#b8907f"/>
<path d="M593 419C608 421 628 423 640 425.5L648.6 429L657 427C670 428 686 430 698 431C684 434.5 664 435 648.6 433.5C632 432 610 427 593 419Z" fill="#a17a6c"/>
<path d="M596 421C614 428 632 432 648.6 433.5C664 435.5 682 435 697 431" stroke="#6a463c" stroke-width="1.6" fill="none" opacity=".8" filter="url(#b1)"/>
<path d="M604 432C618 447 634 452.5 648.6 452.5C664 452.5 680 446 691 436" stroke="#85604f" stroke-width="2.2" fill="none" opacity=".45" filter="url(#b2)"/>
<ellipse cx="647" cy="443" rx="22" ry="4.6" fill="#d4ad9e" opacity=".7" filter="url(#b2)"/>
<ellipse cx="648" cy="459" rx="22" ry="4" fill="#6a4c3e" opacity=".45" filter="url(#b2)"/>
<path d="M592 414C588 420 590 426 596 430" stroke="#5a4033" stroke-width="2" fill="none" opacity=".5" filter="url(#b1)"/>
<path d="M700 426C704 430 702 436 698 440" stroke="#5a4033" stroke-width="2" fill="none" opacity=".5" filter="url(#b1)"/>
<path d="M572 440C580 470 600 492 622 504C640 512 660 508 680 496C700 482 718 458 728 436C716 452 700 470 680 478C660 486 632 486 612 476C594 466 580 452 572 440Z" fill="#553c2f" opacity=".52" filter="url(#b4)"/>
<ellipse cx="646" cy="478" rx="30" ry="9" fill="#5a4133" opacity=".3" filter="url(#b4)"/>
<ellipse cx="646" cy="500" rx="30" ry="9" fill="#b58e79" opacity=".5" filter="url(#b4)"/>
<path d="M762 300C760 340 756 380 742 416C754 400 766 370 770 320Z" fill="#2c1d16" opacity=".6" filter="url(#b4)"/>
<path d="M556 400C558 440 570 470 590 490C580 460 574 430 572 400Z" fill="#4a3226" opacity=".55" filter="url(#b4)"/>
<path d="M596 408C588 420 586 440 592 456C600 470 612 478 624 482C612 466 606 448 606 430Z" fill="#5a4033" opacity=".4" filter="url(#b4)"/>
<path d="M700 420C708 436 706 456 696 470C690 478 680 484 670 486C684 470 690 450 690 432Z" fill="#5a4033" opacity=".4" filter="url(#b4)"/>
<path d="M566 425C580 480 620 512 645 514C680 512 725 470 742 420C720 440 690 462 648 462C610 462 585 445 566 425Z" fill="#000" filter="url(#noise)" opacity=".55"/>
<path d="M590 200C620 178 720 178 750 210C720 236 620 236 590 200Z" fill="#000" filter="url(#noise)" opacity=".45"/>
<path d="M576.0 287.0C578.3 286.2 585.0 283.3 590.0 282.0C595.0 280.7 600.7 279.7 606.0 279.2C611.3 278.7 617.0 278.6 622.0 278.8C627.0 279.0 632.5 279.4 636.0 280.2C639.5 281.0 641.3 281.8 643.0 283.5C644.7 285.2 645.5 289.3 646.0 290.5" stroke="#4d3d2a" stroke-width="4.2" fill="none" stroke-linecap="round" opacity=".92" filter="url(#b1)"/>
<path d="M673.0 293.0C673.9 291.7 675.7 286.3 678.5 285.0C681.3 283.7 685.8 284.6 690.0 285.0C694.2 285.4 699.3 286.2 704.0 287.3C708.7 288.4 713.2 289.8 718.0 291.5C722.8 293.2 728.5 295.0 733.0 297.4C737.5 299.8 743.0 304.6 745.0 306.0" stroke="#4d3d2a" stroke-width="4" fill="none" stroke-linecap="round" opacity=".9" filter="url(#b1)"/>
<path d="M580 312C590 302 604 298 616 301C622 303 627 309 630 316" stroke="#6a4a3c" stroke-width="2" fill="none" opacity=".6" filter="url(#b1)"/>
<clipPath id="eL"><path d="M579.0 321.5C580.2 320.2 583.5 315.8 586.0 313.6C588.5 311.4 591.2 309.7 594.0 308.4C596.8 307.1 600.0 306.2 603.0 306.0C606.0 305.8 609.2 306.3 612.0 307.4C614.8 308.5 617.4 310.2 620.0 312.6C622.6 315.0 626.2 320.0 627.5 321.5L627.5 321.5C626.2 321.8 622.9 322.9 620.0 323.4C617.1 323.9 613.3 324.2 610.0 324.4C606.7 324.6 603.3 324.5 600.0 324.4C596.7 324.3 593.5 324.1 590.0 323.6C586.5 323.1 580.8 321.9 579.0 321.5Z"/></clipPath><path d="M579.0 321.5C580.2 320.2 583.5 315.8 586.0 313.6C588.5 311.4 591.2 309.7 594.0 308.4C596.8 307.1 600.0 306.2 603.0 306.0C606.0 305.8 609.2 306.3 612.0 307.4C614.8 308.5 617.4 310.2 620.0 312.6C622.6 315.0 626.2 320.0 627.5 321.5L627.5 321.5C626.2 321.8 622.9 322.9 620.0 323.4C617.1 323.9 613.3 324.2 610.0 324.4C606.7 324.6 603.3 324.5 600.0 324.4C596.7 324.3 593.5 324.1 590.0 323.6C586.5 323.1 580.8 321.9 579.0 321.5Z" fill="#3b2a22" stroke="#3b2a22" stroke-width="3.4" opacity=".5" filter="url(#b1)"/><path d="M579.0 321.5C580.2 320.2 583.5 315.8 586.0 313.6C588.5 311.4 591.2 309.7 594.0 308.4C596.8 307.1 600.0 306.2 603.0 306.0C606.0 305.8 609.2 306.3 612.0 307.4C614.8 308.5 617.4 310.2 620.0 312.6C622.6 315.0 626.2 320.0 627.5 321.5L627.5 321.5C626.2 321.8 622.9 322.9 620.0 323.4C617.1 323.9 613.3 324.2 610.0 324.4C606.7 324.6 603.3 324.5 600.0 324.4C596.7 324.3 593.5 324.1 590.0 323.6C586.5 323.1 580.8 321.9 579.0 321.5Z" fill="#bd9291"/><g clip-path="url(#eL)"><circle cx="602.3" cy="315.4" r="8.8" fill="url(#gIris)"/><circle cx="599.9" cy="313.2" r="1.1" fill="#e8fff0" opacity=".55"/><path d="M579.0 321.5C580.2 320.2 583.5 315.8 586.0 313.6C588.5 311.4 591.2 309.7 594.0 308.4C596.8 307.1 600.0 306.2 603.0 306.0C606.0 305.8 609.2 306.3 612.0 307.4C614.8 308.5 617.4 310.2 620.0 312.6C622.6 315.0 626.2 320.0 627.5 321.5" stroke="#2a1c16" stroke-width="6" fill="none" opacity=".55" filter="url(#b1)"/></g><path d="M579.0 321.5C580.2 320.2 583.5 315.8 586.0 313.6C588.5 311.4 591.2 309.7 594.0 308.4C596.8 307.1 600.0 306.2 603.0 306.0C606.0 305.8 609.2 306.3 612.0 307.4C614.8 308.5 617.4 310.2 620.0 312.6C622.6 315.0 626.2 320.0 627.5 321.5" stroke="#2b1e18" stroke-width="2.3" fill="none"/><path d="M627.5 321.5C626.2 321.8 622.9 322.9 620.0 323.4C617.1 323.9 613.3 324.2 610.0 324.4C606.7 324.6 603.3 324.5 600.0 324.4C596.7 324.3 593.5 324.1 590.0 323.6C586.5 323.1 580.8 321.9 579.0 321.5" stroke="#4a342a" stroke-width="1.5" fill="none"/>
<path d="M684 322C692 314 702 310 712 311C724 313 733 320 739 329" stroke="#6a4a3c" stroke-width="2" fill="none" opacity=".6" filter="url(#b1)"/>
<clipPath id="eR"><path d="M685.5 328.5C686.6 327.4 689.6 323.8 692.0 322.0C694.4 320.2 697.2 318.6 700.0 317.8C702.8 317.0 706.0 316.7 709.0 317.0C712.0 317.3 714.8 318.0 718.0 319.4C721.2 320.8 724.9 323.2 728.0 325.6C731.1 328.0 735.1 332.6 736.5 334.0L736.5 334.0C734.9 334.3 730.2 335.7 727.0 336.0C723.8 336.3 720.5 336.2 717.0 336.0C713.5 335.8 709.7 335.3 706.0 334.6C702.3 333.9 698.4 333.0 695.0 332.0C691.6 331.0 687.1 329.1 685.5 328.5Z"/></clipPath><path d="M685.5 328.5C686.6 327.4 689.6 323.8 692.0 322.0C694.4 320.2 697.2 318.6 700.0 317.8C702.8 317.0 706.0 316.7 709.0 317.0C712.0 317.3 714.8 318.0 718.0 319.4C721.2 320.8 724.9 323.2 728.0 325.6C731.1 328.0 735.1 332.6 736.5 334.0L736.5 334.0C734.9 334.3 730.2 335.7 727.0 336.0C723.8 336.3 720.5 336.2 717.0 336.0C713.5 335.8 709.7 335.3 706.0 334.6C702.3 333.9 698.4 333.0 695.0 332.0C691.6 331.0 687.1 329.1 685.5 328.5Z" fill="#3b2a22" stroke="#3b2a22" stroke-width="3.4" opacity=".5" filter="url(#b1)"/><path d="M685.5 328.5C686.6 327.4 689.6 323.8 692.0 322.0C694.4 320.2 697.2 318.6 700.0 317.8C702.8 317.0 706.0 316.7 709.0 317.0C712.0 317.3 714.8 318.0 718.0 319.4C721.2 320.8 724.9 323.2 728.0 325.6C731.1 328.0 735.1 332.6 736.5 334.0L736.5 334.0C734.9 334.3 730.2 335.7 727.0 336.0C723.8 336.3 720.5 336.2 717.0 336.0C713.5 335.8 709.7 335.3 706.0 334.6C702.3 333.9 698.4 333.0 695.0 332.0C691.6 331.0 687.1 329.1 685.5 328.5Z" fill="#bd9291"/><g clip-path="url(#eR)"><circle cx="701" cy="325.6" r="9" fill="url(#gIris)"/><circle cx="698.6" cy="323.40000000000003" r="1.1" fill="#e8fff0" opacity=".55"/><path d="M685.5 328.5C686.6 327.4 689.6 323.8 692.0 322.0C694.4 320.2 697.2 318.6 700.0 317.8C702.8 317.0 706.0 316.7 709.0 317.0C712.0 317.3 714.8 318.0 718.0 319.4C721.2 320.8 724.9 323.2 728.0 325.6C731.1 328.0 735.1 332.6 736.5 334.0" stroke="#2a1c16" stroke-width="6" fill="none" opacity=".55" filter="url(#b1)"/></g><path d="M685.5 328.5C686.6 327.4 689.6 323.8 692.0 322.0C694.4 320.2 697.2 318.6 700.0 317.8C702.8 317.0 706.0 316.7 709.0 317.0C712.0 317.3 714.8 318.0 718.0 319.4C721.2 320.8 724.9 323.2 728.0 325.6C731.1 328.0 735.1 332.6 736.5 334.0" stroke="#2b1e18" stroke-width="2.3" fill="none"/><path d="M736.5 334.0C734.9 334.3 730.2 335.7 727.0 336.0C723.8 336.3 720.5 336.2 717.0 336.0C713.5 335.8 709.7 335.3 706.0 334.6C702.3 333.9 698.4 333.0 695.0 332.0C691.6 331.0 687.1 329.1 685.5 328.5" stroke="#4a342a" stroke-width="1.5" fill="none"/>
<path d="M576.5 313L588 304L591 306.5L584.5 312.5L581 318.5ZM578.5 322L588 320.6L590 323.4L585.6 327Z" fill="#dedede"/><path d="M579 314L588 306.4M581 323.6L588 323" stroke="#9a9a9a" stroke-width=".8" opacity=".7"/>
<path d="M727 317.6L733.4 319L738.4 327.6L737 334L732.6 331L729.6 324ZM724.6 336.4L735 334.8L733.4 338.2L726.6 339.2Z" fill="#e2e2e2"/><path d="M730 320L735.6 330" stroke="#9a9a9a" stroke-width=".8" opacity=".7"/>
</g>
<path d="M672.3 167.2C679.7 167.4 685.0 167.9 692.0 169.7C699.0 171.5 707.0 174.5 714.0 178.2C721.0 181.9 728.0 186.9 733.7 191.8C739.4 196.7 744.1 202.0 748.4 207.7C752.7 213.4 756.6 220.2 759.5 226.1C762.4 232.0 764.0 237.2 765.6 243.3C767.2 249.5 768.5 256.4 769.3 263.0C770.1 269.6 770.4 276.1 770.5 282.6C770.6 289.2 770.4 296.2 770.0 302.3C769.6 308.4 768.8 313.2 768.0 319.5C767.2 325.8 765.8 332.6 765.0 340.0C764.2 347.4 764.2 356.2 763.1 364.0C762.0 371.8 760.4 379.8 758.2 386.6C756.0 393.4 752.9 399.3 750.0 405.0C747.1 410.7 744.5 414.2 741.0 421.0C737.5 427.8 733.3 437.8 728.8 445.6C724.3 453.4 720.1 459.9 714.0 467.7C707.9 475.5 699.8 485.3 692.0 492.3C684.2 499.3 675.6 505.7 667.4 509.5C659.2 513.3 650.2 514.7 642.8 514.9C635.4 515.1 630.2 513.6 623.2 510.7C616.2 507.8 608.0 502.7 601.0 497.2C594.0 491.7 587.0 485.1 581.4 477.6C575.8 470.1 570.8 459.4 567.5 452.0C564.2 444.6 563.5 441.3 561.8 433.3C560.1 425.3 558.4 412.3 557.2 403.9C556.0 395.5 555.3 389.6 554.6 383.0C553.9 376.4 553.3 370.7 553.2 364.0C553.1 357.3 553.4 350.0 553.9 343.0C554.4 336.0 555.4 329.4 556.0 322.0C556.6 314.6 557.0 305.6 557.5 298.6C558.0 291.6 558.6 286.6 559.3 280.2C560.0 273.8 560.8 267.1 561.8 260.5C562.8 253.9 563.6 247.5 565.4 240.9C567.2 234.3 569.3 227.5 572.8 221.2C576.3 214.8 581.2 208.5 586.3 202.8C591.4 197.1 597.0 191.5 603.5 186.8C610.0 182.1 618.2 177.7 625.6 174.6C633.0 171.5 639.9 169.6 647.7 168.4C655.5 167.2 664.9 167.0 672.3 167.2Z" fill="none" stroke="#2a1c15" stroke-width=".8" opacity=".6"/>
</svg>
<!--/FACE-->
</div>
<!--OVERLAY-->
<svg style="left:0;top:0" width="1429" height="855" viewBox="0 0 1429 855" fill="none">
<clipPath id="cvclip"><rect x="83" y="94" width="1066" height="553"/></clipPath>
<g clip-path="url(#cvclip)" stroke="#050505" stroke-width="1.15" stroke-linejoin="round">
<path d="M674 170.5L648.2 430.5L607 647"/>
<path d="M614.3 316.5L648.2 430.5L701.3 326.5"/>
<path d="M340 647L348.5 640.8L365.4 631L533.2 624.8L544.5 647"/>
<path d="M677.5 647L684 639.2L740 647"/>
</g>
<circle cx="356.8" cy="638.3" r="8.3" fill="#fafafa"/>
<g stroke="#333" stroke-width=".8"><circle cx="356.8" cy="638.3" r="1.6" fill="#333"/><path d="M356.8 634.3V642.3M352.8 638.3H360.8M354 635.5L359.6 641.1M359.6 635.5L354 641.1"/></g>
<g stroke="#e8e8e8" stroke-width="1"><circle cx="109.3" cy="557.2" r="6"/><ellipse cx="109.3" cy="557.2" rx="2.6" ry="6"/><path d="M103.6 555.4H115M109.3 551.2V563.2M104 559.6C107 558.4 111.6 558.4 114.6 559.6" stroke-width=".9"/></g>
<path transform="translate(126.6 557)" d="M0 -6.2L2.4 -3.6H0.9V-0.9H3.6V-2.4L6.2 0L3.6 2.4V0.9H0.9V3.6H2.4L0 6.2L-2.4 3.6H-0.9V0.9H-3.6V2.4L-6.2 0L-3.6 -2.4V-0.9H-0.9V-3.6H-2.4Z" stroke="#e8e8e8" stroke-width=".9" stroke-linejoin="round"/>
<path transform="translate(145 557)" d="M0 -7L3.4 -3.2H1.6V1.2H5L0 6.8L-5 1.2H-1.6V-3.2H-3.4Z" stroke="#e8e8e8" stroke-width="1.1" fill="#000" stroke-linejoin="round"/>
<path d="M119.2 597V576" stroke="#2c7d2c" stroke-width="1.1"/><path d="M119.3 572L121.6 577H117Z" fill="#4be24b"/>
<path d="M119.2 597L133.5 588.3" stroke="#3787cf" stroke-width="1.1"/><path d="M137 585.8L136 590.2L131.8 587Z" fill="#3f9ff0" stroke="#3f9ff0" stroke-width=".8" stroke-linejoin="round"/>
<path d="M119.2 597L138 604.4" stroke="#c74747" stroke-width="1.1"/><path d="M142 606L137 607.2L138.8 602.6Z" fill="#f05454"/>
</svg>
<!--/OVERLAY-->
<!--NAV-->
<div id="nav">
<svg style="left:88.5px;top:80px" width="5" height="5" viewBox="0 0 5 5"><path d="M.3 .3L4.7 4.7M4.7 .3L.3 4.7" stroke="#c0c0c0" stroke-width=".9"/></svg>
<div class="t b" id="tabt" style="left:101px;top:79px;font-size:8.95px;color:#f2f2f2;letter-spacing:0px">My_Fuse_Model(1).psd @ 66.7% (Layer 1, RGB/8) *</div>
<div style="left:324px;top:72px;width:1px;height:22px;background:#3a3a3a"></div>
<div style="left:85px;top:98px;width:196px;height:195px;background:#646464;box-shadow:0 0 0 .5px #3c3c3c"></div>
<div style="left:88px;top:112px;width:191px;height:179px;background:#cdcdcd;overflow:hidden" id="navc"></div>
<div style="left:108.7px;top:112px;width:1px;height:179px;background:#7a7a7a"></div>
<div style="left:145.70000000000002px;top:112px;width:1px;height:179px;background:#7a7a7a"></div>
<div style="left:219.6px;top:112px;width:1px;height:179px;background:#7a7a7a"></div>
<div style="left:256.2px;top:112px;width:1px;height:179px;background:#7a7a7a"></div>
<div style="left:88px;top:127.80000000000001px;width:191px;height:1px;background:#7a7a7a"></div>
<div style="left:88px;top:164.5px;width:191px;height:1px;background:#7a7a7a"></div>
<div style="left:88px;top:238.20000000000002px;width:191px;height:1px;background:#7a7a7a"></div>
<div style="left:88px;top:274.79999999999995px;width:191px;height:1px;background:#7a7a7a"></div>
<div style="left:88px;top:201.5px;width:191px;height:1.1px;background:#d84a48"></div>
<div style="left:182.5px;top:112px;width:1.25px;height:179px;background:#2c24e0"></div>
<div class="t" style="left:151px;top:159.5px;font-family:'Liberation Mono','DejaVu Sans Mono',monospace;font-weight:bold;font-size:8px;color:#737373;letter-spacing:-.42px;text-shadow:0 0 .4px #777">1048.19<span style="font-size:6.4px;letter-spacing:.5px;margin-left:6px;position:static">mm</span></div>
<div class="t" style="left:151px;top:223px;font-family:'Liberation Mono','DejaVu Sans Mono',monospace;font-weight:bold;font-size:8px;color:#737373;letter-spacing:-.42px;text-shadow:0 0 .4px #777">1048.19<span style="font-size:6.4px;letter-spacing:.5px;margin-left:6px;position:static">mm</span></div>
<div class="t" style="left:135px;top:176.5px;transform-origin:0 0;transform:rotate(90deg);font-family:'Liberation Mono','DejaVu Sans Mono',monospace;font-weight:bold;font-size:8px;color:#737373;letter-spacing:-.42px;text-shadow:0 0 .4px #777">739.46<span style="font-size:6.4px;letter-spacing:.5px;margin-left:6px;position:static">mm</span></div>
<div class="t" style="left:221.2px;top:176.5px;transform-origin:0 0;transform:rotate(90deg);font-family:'Liberation Mono','DejaVu Sans Mono',monospace;font-weight:bold;font-size:8px;color:#737373;letter-spacing:-.42px;text-shadow:0 0 .4px #777">739.46<span style="font-size:6.4px;letter-spacing:.5px;margin-left:6px;position:static">mm</span></div>
<svg style="left:0;top:0" width="1429" height="855" viewBox="0 0 1429 855"><path d="M156.3 169.5L152.6 172.6L150.5 181.6L147.4 190.0L141.1 193.2L135.8 200.5L137.4 201.6L142.6 196.3L145.3 197.4L144.2 202.1L145.8 202.1L148.9 194.2L154.7 184.7L156.8 181.6L155.8 196.3L155.8 204.7L160.0 209.5L165.3 207.4L168.4 204.7L172.6 207.4L178.9 206.8L182.1 203.7L187.4 208.9L192.6 211.6L190.5 216.3L195.3 213.2L194.2 223.7L196.8 221.6L200.5 211.1L201.6 202.6L207.4 201.6L211.6 194.2L211.1 188.9L206.8 186.3L206.8 182.1L204.2 180.0L201.1 181.6L200.5 185.8L195.8 186.3L192.6 182.6L183.2 177.4L172.6 176.3L169.5 176.8L164.2 172.6Z" fill="#0e0b0a" stroke="#0e0b0a" stroke-width="1.2" stroke-linejoin="round"/><path d="M157 185L166 203L176 190" fill="none" stroke="#1f2a33" stroke-width="1.5" opacity=".8"/><path d="M170 205C176 207 182 200 184 192" fill="none" stroke="#3a2419" stroke-width="1.4" opacity=".7"/></svg>
<div style="left:92px;top:100.5px;width:1.6px;height:7.5px;background:repeating-linear-gradient(#d0d0d0 0 1.2px,#646464 1.2px 2.1px)"></div>
<svg style="left:97px;top:102px" width="5" height="5" viewBox="0 0 5 5"><path d="M.3 .3L4.7 4.7M4.7 .3L.3 4.7" stroke="#ececec" stroke-width=".9"/></svg>
<svg style="left:110px;top:101px" width="10.4" height="6.4" viewBox="0 0 10.4 6.4" fill="#ececec"><rect x="0" y="0" width="7" height="6.4" rx=".6"/><path d="M7.2 3.2L10.4 .4V6Z"/></svg>
<svg style="left:123px;top:103.4px" width="4.4" height="2.6" viewBox="0 0 4.4 2.6"><path d="M0 0H4.4L2.2 2.6Z" fill="#808080"/></svg>
<svg style="left:268px;top:100px" width="9" height="9" viewBox="0 0 9 9" fill="none" stroke="#e8e8e8"><rect x=".5" y=".5" width="7" height="7" stroke-width="1"/><rect x="4.6" y="4.6" width="4" height="4" fill="#e8e8e8" stroke="#646464" stroke-width=".6"/><path d="M1.6 1.6L4.4 4.4M1.4 3.6V1.4H3.6" stroke-width=".9"/></svg>
<svg style="left:273px;top:285px" width="5" height="5" viewBox="0 0 5 5"><path d="M5 0L0 5M5 2L2 5M5 4L4 5" stroke="#b0b0b0" stroke-width=".6"/></svg>
</div>
<!--/NAV-->
<!--STATUS-->
<!--TIMELINE-->
<div style="left:83px;top:647px;width:1066px;height:12.5px;background:#4a4a4a"></div>
<div style="left:83px;top:647px;width:201px;height:12.5px;background:#4f4f4f"></div>
<div style="left:284px;top:647px;width:1px;height:12.5px;background:#434343"></div>
<div style="left:1149px;top:94px;width:12px;height:553px;background:#4a4a4a"></div>
<div style="left:1149px;top:647px;width:12px;height:12.5px;background:#545454"></div>
<div class="t" style="left:90.5px;top:648px;font-size:8.35px;color:#e8e8e8">66.67%</div>
<svg style="left:131px;top:648.5px" width="10" height="9" viewBox="0 0 10 9" fill="none" stroke="#e6e6e6" stroke-width="1"><path d="M3.6 1.6H.6V8.2H7.8V6"/><path d="M3.4 6C3.6 4 5 3 6.8 3V1.2L9.8 3.9L6.8 6.4V4.8C5.6 4.7 4.4 5 3.4 6Z" fill="#e6e6e6" stroke="none"/></svg>
<div class="t" style="left:174px;top:648px;font-size:8.35px;color:#d4d4d4;letter-spacing:-.05px">Doc: 3.52M/4.69M</div>
<svg style="left:277.3px;top:649.8px" width="3" height="6.4" viewBox="0 0 3 6.4"><path d="M.4 .3L2.6 3.2L.4 6.1" fill="none" stroke="#d8d8d8" stroke-width=".9"/></svg>
<div style="left:83px;top:659.5px;width:1078px;height:2.5px;background:#3e3e3e"></div>
<div style="left:83px;top:662px;width:1078px;height:21px;background:#424242"></div>
<div style="left:83px;top:662px;width:47px;height:21px;background:#535353"></div>
<div style="left:83px;top:683px;width:1078px;height:103px;background:#535353"></div>
<div class="t b" style="left:89.5px;top:667.5px;font-size:8.5px;color:#f0f0f0">Timeline</div>
<svg style="left:1148.5px;top:669px" width="9.6" height="6" viewBox="0 0 9.6 6" fill="#c6c6c6"><path d="M0 1.6H3.2L1.6 3.4Z"/><rect x="4" y="0" width="5.6" height="1"/><rect x="4" y="1.7" width="5.6" height="1"/><rect x="4" y="3.4" width="5.6" height="1"/><rect x="4" y="5" width="5.6" height="1"/></svg>
<svg style="left:89px;top:694.1999999999999px" width="8" height="6.4" viewBox="0 0 8 6.4" fill="#8a8a8a"><rect x="0" y="0" width="1.4" height="6.4"/><path d="M7.6 0V6.4L2.4 3.2Z"/></svg>
<svg style="left:112.5px;top:694.1999999999999px" width="8.6" height="6.4" viewBox="0 0 8.6 6.4" fill="#8a8a8a"><rect x="7.2" y="0" width="1.4" height="6.4"/><path d="M5.6 0V6.4L0 3.2Z"/></svg>
<svg style="left:138.5px;top:693.6px" width="6.6" height="7.6" viewBox="0 0 6.6 7.6" fill="#e6e6e6"><path d="M0 0L6.6 3.8L0 7.6Z"/></svg>
<svg style="left:161px;top:694.1999999999999px" width="8.8" height="6.4" viewBox="0 0 8.8 6.4" fill="#e6e6e6"><rect x="0" y="0" width="1.5" height="6.4"/><path d="M3 0V6.4L8.8 3.2Z"/></svg>
<div style="left:178.8px;top:688px;width:20px;height:19px;background:#363636;border-radius:2px;box-shadow:0 0 0 .5px #5c5c5c"></div>
<svg style="left:183.4px;top:693px" width="11" height="9" viewBox="0 0 11 9" fill="#e6e6e6"><path d="M0 3H2.2L5.2 .4V8.6L2.2 6H0Z"/><path d="M6.6 2.6C7.6 3.6 7.6 5.4 6.6 6.4M8 1.2C9.8 3 9.8 6 8 7.8" fill="none" stroke="#e6e6e6" stroke-width="1"/></svg>
<svg style="left:207.6px;top:693px" width="9" height="9" viewBox="-4.5 -4.5 9 9"><g fill="#e6e6e6"><circle r="3"/><rect x="-0.9" y="-4.4" width="1.8" height="2.2" transform="rotate(0)"/><rect x="-0.9" y="-4.4" width="1.8" height="2.2" transform="rotate(45)"/><rect x="-0.9" y="-4.4" width="1.8" height="2.2" transform="rotate(90)"/><rect x="-0.9" y="-4.4" width="1.8" height="2.2" transform="rotate(135)"/><rect x="-0.9" y="-4.4" width="1.8" height="2.2" transform="rotate(180)"/><rect x="-0.9" y="-4.4" width="1.8" height="2.2" transform="rotate(225)"/><rect x="-0.9" y="-4.4" width="1.8" height="2.2" transform="rotate(270)"/><rect x="-0.9" y="-4.4" width="1.8" height="2.2" transform="rotate(315)"/></g><circle r="1.3" fill="#535353"/></svg>
<svg style="left:219px;top:705px" width="2.6" height="1.8" viewBox="0 0 2.6 1.8"><path d="M0 0H2.6L1.3 1.8Z" fill="#ddd"/></svg>
<div style="left:227.5px;top:686px;width:1px;height:23px;background:#484848"></div>
<svg style="left:234.5px;top:692px" width="13" height="10.6" viewBox="0 0 13 10.6" fill="none" stroke="#e6e6e6" stroke-width="1.1"><circle cx="2.2" cy="2.2" r="1.7"/><circle cx="2.2" cy="8.4" r="1.7"/><path d="M3.6 3.2L12.6 9.2M3.6 7.4L12.6 1.4" stroke-width="1.3"/></svg>
<svg style="left:261px;top:692.4px" width="10" height="10" viewBox="0 0 10 10"><rect x=".5" y=".5" width="9" height="9" fill="none" stroke="#e6e6e6" stroke-width="1"/><path d="M9 1V9H1Z" fill="#e6e6e6"/></svg>
<div style="left:83px;top:712.4px;width:198.6px;height:31.4px;background:#383838"></div>
<div style="left:281.6px;top:683px;width:1.4px;height:87px;background:#494949"></div>
<svg style="left:89px;top:724.6px" width="3.4" height="7.6" viewBox="0 0 3.4 7.6"><path d="M.4 .3L3 3.8L.4 7.3" fill="none" stroke="#d0d0d0" stroke-width=".9"/></svg>
<svg style="left:260px;top:724px" width="7" height="8.6" viewBox="0 0 7 8.6" fill="none" stroke="#dcdcdc"><rect x=".5" y=".5" width="6" height="7.6" stroke-width="1"/><path d="M2.2 .5V8.1M4.8 .5V8.1M.5 3H2.2M.5 5.6H2.2M4.8 3H6.5M4.8 5.6H6.5M2.2 4.3H4.8" stroke-width=".8"/></svg>
<div style="left:268.5px;top:724.4px;width:8px;height:8px;background:#555"></div>
<svg style="left:270px;top:727px" width="5" height="3.2" viewBox="0 0 5 3.2"><path d="M.3 .3L2.5 2.7L4.7 .3" fill="none" stroke="#cfcfcf" stroke-width=".9"/></svg>
<div style="left:83px;top:743.8px;width:198.6px;height:.8px;background:#484848"></div>
<div class="t" style="left:88.5px;top:751px;font-size:8.35px;color:#e6e6e6">Audio Track</div>
<svg style="left:238.5px;top:750.6px" width="11" height="9" viewBox="0 0 11 9" fill="#dadada"><path d="M0 3H2.2L5.2 .4V8.6L2.2 6H0Z"/><path d="M6.6 2.6C7.6 3.6 7.6 5.4 6.6 6.4M8 1.2C9.8 3 9.8 6 8 7.8" fill="none" stroke="#dadada" stroke-width="1"/></svg>
<svg style="left:257.5px;top:750px" width="9" height="9.4" viewBox="0 0 9 9.4" fill="#e0e0e0"><path d="M2.6 1.2L8.4 0V6.6H7.4V2.2L3.6 3V8H2.6Z"/><ellipse cx="1.9" cy="8" rx="1.8" ry="1.3"/><ellipse cx="6.7" cy="6.8" rx="1.8" ry="1.3"/></svg>
<svg style="left:269.6px;top:754px" width="5" height="3.2" viewBox="0 0 5 3.2"><path d="M.3 .3L2.5 2.7L4.7 .3" fill="none" stroke="#cfcfcf" stroke-width=".9"/></svg>
<div style="left:83px;top:766px;width:1066px;height:4.6px;background:#4c4c4c"></div>
<div style="left:86.8px;top:775.6px;width:13px;height:3.6px;background:repeating-linear-gradient(90deg,#7a7a7a 0 .7px,transparent .7px 3.1px,#7a7a7a 3.1px 3.8px,transparent 3.8px 4.6px);border-top:.7px solid #7a7a7a;border-bottom:.7px solid #7a7a7a"></div>
<svg style="left:110.6px;top:773.4px" width="9.4" height="8" viewBox="0 0 9.4 8" fill="#e6e6e6"><path d="M0 8C.2 4.6 2.2 2.6 5.2 2.4V0L9.4 3.8L5.2 7.4V5.2C3 5 1.2 6 0 8Z"/></svg>
<div class="t b" style="left:156px;top:772.6px;font-size:8.5px;color:#f2f2f2;letter-spacing:-.2px;font-size:8.3px">0:00:00:00</div>
<div class="t" style="left:232.5px;top:773px;font-size:8.35px;color:#e6e6e6">(30.00 fps)</div>
<div style="left:281.6px;top:770.6px;width:1.4px;height:15.4px;background:#494949"></div>
<div style="left:283px;top:698.4px;width:845px;height:.8px;background:#4d4d4d"></div>
<div class="t" style="left:329.7px;width:40px;text-align:center;top:685.6px;font-size:8.2px;color:#ececec">05f</div>
<div style="left:349.3px;top:696.6px;width:.8px;height:6px;background:#626262"></div>
<div class="t" style="left:389.7px;width:40px;text-align:center;top:685.6px;font-size:8.2px;color:#ececec">10f</div>
<div style="left:409.3px;top:696.6px;width:.8px;height:6px;background:#626262"></div>
<div class="t" style="left:450.4px;width:40px;text-align:center;top:685.6px;font-size:8.2px;color:#ececec">15f</div>
<div style="left:470.0px;top:696.6px;width:.8px;height:6px;background:#626262"></div>
<div class="t" style="left:510.6px;width:40px;text-align:center;top:685.6px;font-size:8.2px;color:#ececec">20f</div>
<div style="left:530.2px;top:696.6px;width:.8px;height:6px;background:#626262"></div>
<div class="t" style="left:571px;width:40px;text-align:center;top:685.6px;font-size:8.2px;color:#ececec">25f</div>
<div style="left:590.6px;top:696.6px;width:.8px;height:6px;background:#626262"></div>
<div class="t" style="left:631.4px;width:40px;text-align:center;top:685.6px;font-size:8.2px;color:#ececec">01:00f</div>
<div style="left:651.0px;top:696.6px;width:.8px;height:6px;background:#626262"></div>
<div class="t" style="left:691.6px;width:40px;text-align:center;top:685.6px;font-size:8.2px;color:#ececec">05f</div>
<div style="left:711.2px;top:696.6px;width:.8px;height:6px;background:#626262"></div>
<div class="t" style="left:752px;width:40px;text-align:center;top:685.6px;font-size:8.2px;color:#ececec">10f</div>
<div style="left:771.6px;top:696.6px;width:.8px;height:6px;background:#626262"></div>
<div class="t" style="left:812.4px;width:40px;text-align:center;top:685.6px;font-size:8.2px;color:#ececec">15f</div>
<div style="left:832.0px;top:696.6px;width:.8px;height:6px;background:#626262"></div>
<div class="t" style="left:872.8px;width:40px;text-align:center;top:685.6px;font-size:8.2px;color:#ececec">20f</div>
<div style="left:892.4px;top:696.6px;width:.8px;height:6px;background:#626262"></div>
<div class="t" style="left:933.2px;width:40px;text-align:center;top:685.6px;font-size:8.2px;color:#ececec">25f</div>
<div style="left:952.8000000000001px;top:696.6px;width:.8px;height:6px;background:#626262"></div>
<div class="t" style="left:993.8px;width:40px;text-align:center;top:685.6px;font-size:8.2px;color:#ececec">02:00f</div>
<div style="left:1013.4px;top:696.6px;width:.8px;height:6px;background:#626262"></div>
<div class="t" style="left:1054px;width:40px;text-align:center;top:685.6px;font-size:8.2px;color:#ececec">05f</div>
<div style="left:1073.6px;top:696.6px;width:.8px;height:6px;background:#626262"></div>
<div style="left:1128px;top:683px;width:1px;height:87px;background:#494949"></div>
<div style="left:1149px;top:712.4px;width:12px;height:73.6px;background:#4a4a4a"></div>
<div style="left:1129px;top:743.8px;width:20px;height:.8px;background:#484848"></div>
<svg style="left:1134px;top:724px" width="8" height="8" viewBox="0 0 8 8"><path d="M4 0V8M0 4H8" stroke="#f0f0f0" stroke-width="1.4"/></svg>
<svg style="left:1134px;top:751.2px" width="8" height="8" viewBox="0 0 8 8"><path d="M4 0V8M0 4H8" stroke="#f0f0f0" stroke-width="1.4"/></svg>
<div style="left:283px;top:744.6px;width:845px;height:21.4px;background:#4a4a4a"></div>
<div style="left:301px;top:744.6px;width:827px;height:21.4px;background:#565656"></div>
<div style="left:283px;top:712.4px;width:845px;height:32px;background:#3a3a3a"></div>
<div style="left:289.3px;top:713.2px;width:838.7px;height:30px;background:#7d5fb0;border:1.2px solid #f4f0fa;border-radius:3px 0 0 3px;border-right:0"></div>
<div style="left:290.5px;top:714.4px;width:36.8px;height:27.6px;border-radius:2px 0 0 2px;background:#fff;overflow:hidden" id="thumb"><svg style="left:0;top:0" width="36.8" height="27.6" viewBox="287 125 657 492" preserveAspectRatio="none"><defs><pattern id="chk2" x="287" y="125" width="164" height="164" patternUnits="userSpaceOnUse"><rect width="164" height="164" fill="#fff"/><rect x="82" width="82" height="82" fill="#cbcbcb"/><rect y="82" width="82" height="82" fill="#cbcbcb"/></pattern></defs><rect x="287" y="125" width="657" height="492" fill="url(#chk2)"/><path d="M527 497L324 533L329 618L888 618L848 573L715 522L680 594L600 587Z" fill="#10191d"/><path d="M287 578L324 552L329 618H287Z" fill="#94705d"/><path d="M566 440L528 497L600 587L680 594L715 522L728 440Z" fill="#a8806b"/><path d="M672 167C740 170 772 230 770 300C768 380 740 470 690 495C660 515 625 515 600 497C560 460 553 380 557 300C560 230 600 170 672 167Z" fill="#a27b67"/><path d="M672 167C740 170 772 230 770 280C700 250 620 250 559 280C562 225 600 170 672 167Z" fill="#6e5242"/><path d="M580 318H626M688 328H736" stroke="#3a2a22" stroke-width="14"/><path d="M596 424L696 432" stroke="#6e4a40" stroke-width="12"/><path d="M640 330L628 400H672Z" fill="#7a5a4a"/></svg></div>
<svg style="left:331px;top:716.4px" width="3" height="6.4" viewBox="0 0 3 6.4"><path d="M.4 .3L2.6 3.2L.4 6.1" fill="none" stroke="#d9cfe8" stroke-width=".9"/></svg>
<div style="left:283.6px;top:699px;width:5px;height:13px;border:1px solid #d0d0d0;border-right:0;border-radius:1.5px 0 0 1.5px"></div>
<div style="left:285.6px;top:703px;width:1.6px;height:5px;background:#d0d0d0"></div>
<div style="left:289.5px;top:710.2px;width:11.5px;height:1.6px;background:#4fa39c"></div>
<div style="left:288.35px;top:697px;width:1.1px;height:69px;background:#c2242c"></div>
<svg style="left:283.4px;top:686.8px" width="10" height="11.2" viewBox="0 0 10 11.2"><path d="M1.6 .5H8.4Q9.5 .5 9.5 1.6V6.6L5 10.6L.5 6.6V1.6Q.5 .5 1.6 .5Z" fill="#2a7ae0" stroke="#dfe9f7" stroke-width=".9"/><path d="M3.2 3V5M5 3V5M6.8 3V5" stroke="#9cc4f5" stroke-width=".8"/></svg>
<svg style="left:289.3px;top:775.6px" width="8" height="4.2" viewBox="0 0 8 4.2" fill="#e0e0e0"><path d="M0 4.2L2.6 1.2L4 2.6L5.2 .4L8 4.2Z"/></svg>
<div style="left:313px;top:773.2px;width:60px;height:2.4px;background:#717171;border-radius:1px"></div>
<svg style="left:342.4px;top:776.4px" width="9" height="7.8" viewBox="0 0 9 7.8"><path d="M4.5 .2L8.6 5.2Q9 7.6 7 7.6H2Q0 7.6 .4 5.2Z" fill="#f4f4f4"/></svg>
<svg style="left:385px;top:774.6px" width="13.4" height="5.4" viewBox="0 0 13.4 5.4" fill="#e0e0e0"><path d="M0 5.4L3.6 1.6L5.4 3.2L8 0L13.4 5.4Z"/></svg>
<div style="left:404px;top:770.6px;width:745px;height:15.4px;background:#4a4a4a"></div>
<div style="left:405.6px;top:775px;width:279px;height:7.8px;background:#6c6c6c;border-radius:4px"></div>
<!--/TIMELINE-->
<!--RIGHT-->
<div style="left:1161px;top:72px;width:3px;height:714px;background:#3e3e3e"></div>
<div style="left:1164px;top:72px;width:214px;height:9.5px;background:#424242"></div>
<svg style="left:1183.6px;top:74.6px" width="6" height="4" viewBox="0 0 6 4" fill="#c4c4c4"><path d="M2.6 0L0 2L2.6 4ZM5.6 0L3 2L5.6 4Z"/></svg>
<svg style="left:1368.4px;top:74.6px" width="6" height="4" viewBox="0 0 6 4" fill="#c4c4c4"><path d="M0 0L2.6 2L0 4ZM3 0L5.6 2L3 4Z"/></svg>
<div style="left:1164px;top:81px;width:214px;height:.9px;background:#4c4c4c"></div>
<div style="left:1164px;top:81.5px;width:28.3px;height:704.5px;background:#535353"></div>
<div style="left:1192.3px;top:81.5px;width:2.4px;height:704.5px;background:#454545"></div>
<div style="left:1164px;top:111.6px;width:28.3px;height:1.8px;background:#3e3e3e"></div>
<div style="left:1164px;top:165px;width:28.3px;height:1.8px;background:#3e3e3e"></div>
<div style="left:1164px;top:196.6px;width:28.3px;height:1.8px;background:#3e3e3e"></div>
<div style="left:1164px;top:249.6px;width:28.3px;height:1.8px;background:#3e3e3e"></div>
<div style="left:1164px;top:281px;width:28.3px;height:1.8px;background:#3e3e3e"></div>
<div style="left:1164px;top:313px;width:28.3px;height:1.8px;background:#3e3e3e"></div>
<div style="left:1170.8px;top:84.5px;width:15px;height:2.6px;background:linear-gradient(90deg,#484848 0 64%,transparent 64%) 0 0/2.6px 100%"></div>
<div style="left:1170.8px;top:115.8px;width:15px;height:2.6px;background:linear-gradient(90deg,#484848 0 64%,transparent 64%) 0 0/2.6px 100%"></div>
<div style="left:1170.8px;top:169px;width:15px;height:2.6px;background:linear-gradient(90deg,#484848 0 64%,transparent 64%) 0 0/2.6px 100%"></div>
<div style="left:1170.8px;top:200.6px;width:15px;height:2.6px;background:linear-gradient(90deg,#484848 0 64%,transparent 64%) 0 0/2.6px 100%"></div>
<div style="left:1170.8px;top:253.6px;width:15px;height:2.6px;background:linear-gradient(90deg,#484848 0 64%,transparent 64%) 0 0/2.6px 100%"></div>
<div style="left:1170.8px;top:285px;width:15px;height:2.6px;background:linear-gradient(90deg,#484848 0 64%,transparent 64%) 0 0/2.6px 100%"></div>
<svg style="left:1172.6px;top:92.6px" width="13" height="14" viewBox="0 0 13 14" fill="none" stroke="#e6e6e6"><rect x=".9" y=".7" width="3.8" height="3.6" stroke-width=".9"/><rect x=".9" y="5.2" width="3.8" height="3.6" stroke-width=".9"/><rect x=".5" y="9.6" width="4.7" height="4.2" fill="#e6e6e6" stroke="none"/><circle cx="2.8" cy="2.5" r=".7" fill="#333" stroke="none"/><circle cx="2.8" cy="7" r=".7" fill="#333" stroke="none"/><path d="M7.6 12C10.8 10.6 12.2 7.2 9.6 3.2" stroke-width="1.5"/><path d="M7 1.2L11.4 1.6L8 5.2Z" fill="#e6e6e6" stroke="none"/></svg>
<svg style="left:1170.6px;top:123.0px" width="16" height="16" viewBox="-8.0 -8.0 16 16" fill="none" stroke="#e6e6e6" stroke-width="1.1"><path d="M-3 -0.4H3V6.6H-3Z" fill="#e6e6e6" stroke="none"/><path d="M-2 -0.6L-4.6 -5.4M0 -0.6V-6.6M2 -0.6L4.6 -4.6" stroke-width="1.1"/><ellipse cx="-4.8" cy="-5.4" rx="1.3" ry="2" fill="#e6e6e6" stroke="none" transform="rotate(-25 -4.8 -5.4)"/><ellipse cx="0" cy="-6" rx="1.1" ry="2.2" fill="#e6e6e6" stroke="none"/><ellipse cx="4.6" cy="-4.8" rx="1.4" ry="1.8" fill="#e6e6e6" stroke="none" transform="rotate(30 4.6 -4.8)"/></svg>
<svg style="left:1170.6px;top:144.8px" width="16" height="16" viewBox="-8.0 -8.0 16 16" fill="none" stroke="#e6e6e6" stroke-width="1.1"><path d="M-2 -3.4H6.4M-6.4 3H1" stroke-width="1.2"/><path d="M-6.6 -3.4C-5.4 -5.2 -2.6 -5.2 -1.4 -3.4C-2.6 -1.6 -5.4 -1.6 -6.6 -3.4Z" fill="#e6e6e6" stroke="none"/><path d="M1.4 3C2.4 1 4.4 -0.4 6.4 -0.6V6.6C4.4 6.4 2.4 5 1.4 3Z" fill="#e6e6e6" stroke="none"/></svg>
<svg style="left:1170.6px;top:175.0px" width="16" height="16" viewBox="-8.0 -8.0 16 16" fill="none" stroke="#e6e6e6" stroke-width="1.1"><path d="M-6.6 -4.6H-3.4M-6.6 -2.4H-3.4M-6.6 -0.2H-3.4" stroke-width=".9"/><path d="M2 -5.8A2.2 2.2 0 0 1 3.4 -2L3 0.6H6.4V3.2H-2.4V0.6H1L0.6 -2A2.2 2.2 0 0 1 2 -5.8ZM-2.6 4.4H6.6V5.8H-2.6Z" fill="#e6e6e6" stroke="none"/></svg>
<div class="t" style="left:1171.6px;top:208.6px;font-size:13.5px;line-height:14px;height:14px;color:#e6e6e6">A</div><div style="left:1182.6px;top:209.4px;width:1px;height:12px;background:#e6e6e6"></div>
<svg style="left:1174.4px;top:230.6px" width="9" height="12" viewBox="0 0 9 12" fill="#e6e6e6"><path d="M3.6 0H8.6V1.2H7.6V12H6.4V1.2H5V12H3.8V6.4A3.2 3.2 0 0 1 3.6 0Z"/></svg>
<svg style="left:1170.6px;top:260.8px" width="16" height="16" viewBox="-8.0 -8.0 16 16" fill="none" stroke="#e6e6e6" stroke-width="1.1"><path d="M-5.6 5.6L4.2 -4.2" stroke-width="1.6"/><path d="M2.6 -5.8A2.6 2.6 0 0 0 5.8 -2.4" stroke-width="1.4"/><path d="M-5.4 -5.4L-3.4 -3.4M-3.6 -3.6L5 5" stroke-width="1.2"/><circle cx="5.2" cy="5.2" r="1.5" stroke-width="1"/><path d="M-6.4 -4.8L-4.8 -6.4L-3 -4.6L-4.6 -3Z" fill="#e6e6e6" stroke="none"/></svg>
<svg style="left:1170.6px;top:294.4px" width="16" height="12.4" viewBox="0 0 16 12.4" fill="none" stroke="#dedede"><path d="M4.6 11.2A4.2 4.2 0 0 1 3.2 3.2A5 5 0 0 1 12.2 3.4A3.9 3.9 0 0 1 11.6 11.2Z" stroke-width="1.5"/><path d="M5.4 8.8A2.2 2.2 0 0 1 5.4 4.6C7 4.6 9 7.2 10.4 8.8M10.8 8.8A2.2 2.2 0 0 0 10.8 4.6C9.6 4.6 8.6 5.6 8 6.4" stroke-width="1.3"/></svg>
<div style="left:1194.7px;top:81.5px;width:183.3px;height:21px;background:#424242"></div>
<div style="left:1194.7px;top:81.5px;width:53.2px;height:21px;background:#535353"></div>
<div class="t b" style="left:1201.6px;top:87.6px;font-size:8.4px;color:#f0f0f0;letter-spacing:-.05px">Properties</div>
<svg style="left:1364px;top:89.4px" width="9.6" height="6" viewBox="0 0 9.6 6" fill="#c6c6c6"><path d="M0 1.6H3.2L1.6 3.4Z"/><rect x="4" y="0" width="5.6" height="1"/><rect x="4" y="1.7" width="5.6" height="1"/><rect x="4" y="3.4" width="5.6" height="1"/><rect x="4" y="5" width="5.6" height="1"/></svg>
<div style="left:1194.7px;top:102.5px;width:183.3px;height:25.4px;background:#535353"></div>
<div style="left:1194.7px;top:127.9px;width:183.3px;height:285px;background:#535353"></div>
<div style="left:1194.7px;top:127.6px;width:183.3px;height:.8px;background:#444"></div>
<svg style="left:1202.6px;top:108.2px" width="16" height="16" viewBox="-8.0 -8.0 16 16" fill="none" stroke="#e6e6e6" stroke-width="1.1"><circle cx="0.6" cy="-5" r="1.5" fill="#e6e6e6" stroke="none"/><path d="M-4.6 -1.4L-1 -2.6L2 -1.2L6 -5.4M-0.6 -2.2L-0.2 2L-3.6 5.6M0 2L3.4 3L4.2 5.8" stroke-width="1.3" stroke-linecap="round" stroke-linejoin="round"/></svg>
<div style="left:1221.2px;top:108px;width:16.8px;height:16.8px;background:#363636;border-radius:2px;box-shadow:0 0 0 .5px #5c5c5c"></div>
<svg style="left:1223.4px;top:109.6px" width="12.4" height="13.6" viewBox="0 0 12.4 13.6"><path d="M.4 .6C2.4 1.8 4.4 1.8 6.2 1C8 1.8 10 1.8 12 .6C12.4 5 11.8 8.4 10.4 10.6C9.2 12.4 7.6 13.4 6.2 13.4C4.8 13.4 3.2 12.4 2 10.6C.6 8.4 0 5 .4 .6Z" fill="#e6e6e6"/><path d="M2.4 4.6C3.4 3.8 4.6 4 5.2 5.2C4.2 5.6 3.2 5.4 2.4 4.6ZM10 4.6C9 3.8 7.8 4 7.2 5.2C8.2 5.6 9.2 5.4 10 4.6ZM3.2 8.4C5.2 9.4 7.2 9.4 9.2 8.4C8.6 10.6 7.4 11.6 6.2 11.6C5 11.6 3.8 10.6 3.2 8.4Z" fill="#363636"/></svg>
<svg style="left:1239.8px;top:108.6px" width="16" height="16" viewBox="-8.0 -8.0 16 16" fill="none" stroke="#e6e6e6" stroke-width="1.1"><path d="M0 -3.6L2.6 -2.2V1.2L0 2.6L-2.6 1.2V-2.2ZM-2.6 -2.2L0 -0.8L2.6 -2.2M0 -0.8V2.6" stroke-width=".8" stroke-linejoin="round"/><path d="M0 -5.4V-3.6M-2.6 1.2L-4.8 3.4M2.6 1.2L4.8 3.4M-4.8 3.4H-3M4.8 3.4H3" stroke-width=".8"/></svg>
<div class="t b" style="left:1260.4px;top:111.8px;font-size:8px;color:#d2d2d2;letter-spacing:0">Face</div>
<svg style="left:1201.4px;top:134.6px" width="12" height="12" viewBox="0 0 12 12" fill="none" stroke="#e6e6e6"><circle cx="4.8" cy="4.8" r="4" stroke-width="1"/><path d="M7.8 7.8L11.4 11.4" stroke-width="1.5"/><path d="M3 4.8H6.6M4.8 3V6.6" stroke-width=".9" opacity=".8"/></svg>
<div class="t" style="left:1219px;top:136px;font-size:8.35px;color:#e6e6e6">Happy</div>
<div style="left:1217.8px;top:147px;width:125px;height:.8px;background:#6e6e6e"></div>
<svg style="left:1346px;top:136.4px" width="8.4" height="8.4" viewBox="-4.2 -4.2 8.4 8.4"><g fill="#e6e6e6"><circle r="2.8"/><rect x="-0.85" y="-4.1" width="1.7" height="2" transform="rotate(0)"/><rect x="-0.85" y="-4.1" width="1.7" height="2" transform="rotate(45)"/><rect x="-0.85" y="-4.1" width="1.7" height="2" transform="rotate(90)"/><rect x="-0.85" y="-4.1" width="1.7" height="2" transform="rotate(135)"/><rect x="-0.85" y="-4.1" width="1.7" height="2" transform="rotate(180)"/><rect x="-0.85" y="-4.1" width="1.7" height="2" transform="rotate(225)"/><rect x="-0.85" y="-4.1" width="1.7" height="2" transform="rotate(270)"/><rect x="-0.85" y="-4.1" width="1.7" height="2" transform="rotate(315)"/></g><circle r="1.2" fill="#535353"/></svg>
<div style="left:1355.6px;top:142.6px;width:1.4px;height:1.4px;background:#ddd"></div>
<div style="left:1197.8px;top:157px;width:165px;height:.9px;background:#464646"></div>
<div style="left:1198.4px;top:170.4px;width:164.3px;height:167px;background:#4b4b4b;box-shadow:0 0 0 .7px #444"></div>
<div style="left:1350px;top:170.4px;width:12.7px;height:167px;background:#4b4b4b"></div>
<div style="left:1350px;top:325.6px;width:11.4px;height:11.2px;background:#535353"></div>
<div style="left:1199px;top:172px;width:151px;height:24.6px;background:#535353;overflow:hidden"><div class="t" style="left:29.2px;top:7.6px;font-size:10px;line-height:12px;height:12px;color:#f2f2f2;letter-spacing:-.05px">An overly confident side sm</div></div>
<svg style="left:1202.8px;top:173.9px" width="21.2" height="21.2" viewBox="0 0 21.2 21.2"><defs><linearGradient id="tg0" x1="0" y1="0" x2="0" y2="1"><stop offset="0" stop-color="#fbfbfb"/><stop offset=".35" stop-color="#e4e5e6"/><stop offset=".75" stop-color="#a2a6aa"/><stop offset="1" stop-color="#6a7076"/></linearGradient></defs><rect width="21.2" height="21.2" fill="url(#tg0)"/><path d="M0 21.2C.4 19.4 2.6 18.4 5.6 17.8L8.2 16.6V14H13V16.6L15.6 17.8C18.6 18.4 20.8 19.4 21.2 21.2Z" fill="#c08a6c"/><path d="M3.6 18.2L5 17.8L5.8 21.2H4ZM17.6 18.2L16.2 17.8L15.4 21.2H17.2Z" fill="#2f5668"/><ellipse cx="10.6" cy="9.6" rx="4.3" ry="5.6" fill="#c48c6e"/><path d="M6.2 10.4C4.6 8 4.4 4.4 6.6 2.6C8.4 .8 12.8 .8 14.6 2.6C16.8 4.4 16.6 8 15 10.4C15.2 7.6 14.4 6 13.2 5.2C11.6 6 9.4 6 8 5.2C6.8 6 6 7.6 6.2 10.4Z" fill="#2b1a12"/><path d="M7.6 9H9.6M11.6 9H13.6" stroke="#4a3026" stroke-width="1"/><path d="M9.2 12.6C10 13.1 11.2 13.1 12 12.6" stroke="#8a4a3e" stroke-width=".8" fill="none"/><path d="M10.6 9.4V11.4" stroke="#a06c52" stroke-width=".7"/></svg>
<div style="left:1199px;top:198px;width:151px;height:24.6px;background:#383838;overflow:hidden"><div class="t" style="left:29.2px;top:7.6px;font-size:10px;line-height:12px;height:12px;color:#f2f2f2;letter-spacing:-.05px">A soft, simple smile</div></div>
<svg style="left:1202.8px;top:199.9px" width="21.2" height="21.2" viewBox="0 0 21.2 21.2"><defs><linearGradient id="tg1" x1="0" y1="0" x2="0" y2="1"><stop offset="0" stop-color="#fbfbfb"/><stop offset=".35" stop-color="#e4e5e6"/><stop offset=".75" stop-color="#a2a6aa"/><stop offset="1" stop-color="#6a7076"/></linearGradient></defs><rect width="21.2" height="21.2" fill="url(#tg1)"/><path d="M0 21.2C.4 19.4 2.6 18.4 5.6 17.8L8.2 16.6V14H13V16.6L15.6 17.8C18.6 18.4 20.8 19.4 21.2 21.2Z" fill="#c08a6c"/><path d="M3.6 18.2L5 17.8L5.8 21.2H4ZM17.6 18.2L16.2 17.8L15.4 21.2H17.2Z" fill="#2f5668"/><ellipse cx="10.6" cy="9.6" rx="4.3" ry="5.6" fill="#c48c6e"/><path d="M6.2 10.4C4.6 8 4.4 4.4 6.6 2.6C8.4 .8 12.8 .8 14.6 2.6C16.8 4.4 16.6 8 15 10.4C15.2 7.6 14.4 6 13.2 5.2C11.6 6 9.4 6 8 5.2C6.8 6 6 7.6 6.2 10.4Z" fill="#2b1a12"/><path d="M7.6 9H9.6M11.6 9H13.6" stroke="#4a3026" stroke-width="1"/><path d="M9.2 12.6C10 13.1 11.2 13.1 12 12.6" stroke="#8a4a3e" stroke-width=".8" fill="none"/><path d="M10.6 9.4V11.4" stroke="#a06c52" stroke-width=".7"/></svg>
<div style="left:1199px;top:224px;width:151px;height:24.6px;background:#535353;overflow:hidden"><div class="t" style="left:29.2px;top:7.6px;font-size:10px;line-height:12px;height:12px;color:#f2f2f2;letter-spacing:-.05px">Flirty expression with a purs</div></div>
<svg style="left:1202.8px;top:225.9px" width="21.2" height="21.2" viewBox="0 0 21.2 21.2"><defs><linearGradient id="tg2" x1="0" y1="0" x2="0" y2="1"><stop offset="0" stop-color="#fbfbfb"/><stop offset=".35" stop-color="#e4e5e6"/><stop offset=".75" stop-color="#a2a6aa"/><stop offset="1" stop-color="#6a7076"/></linearGradient></defs><rect width="21.2" height="21.2" fill="url(#tg2)"/><path d="M0 21.2C.4 19.4 2.6 18.4 5.6 17.8L8.2 16.6V14H13V16.6L15.6 17.8C18.6 18.4 20.8 19.4 21.2 21.2Z" fill="#c08a6c"/><path d="M3.6 18.2L5 17.8L5.8 21.2H4ZM17.6 18.2L16.2 17.8L15.4 21.2H17.2Z" fill="#2f5668"/><ellipse cx="10.6" cy="9.6" rx="4.3" ry="5.6" fill="#c48c6e"/><path d="M6.2 10.4C4.6 8 4.4 4.4 6.6 2.6C8.4 .8 12.8 .8 14.6 2.6C16.8 4.4 16.6 8 15 10.4C15.2 7.6 14.4 6 13.2 5.2C11.6 6 9.4 6 8 5.2C6.8 6 6 7.6 6.2 10.4Z" fill="#2b1a12"/><path d="M7.6 9H9.6M11.6 9H13.6" stroke="#4a3026" stroke-width="1"/><path d="M9.2 12.6C10 13.1 11.2 13.1 12 12.6" stroke="#8a4a3e" stroke-width=".8" fill="none"/><path d="M10.6 9.4V11.4" stroke="#a06c52" stroke-width=".7"/></svg>
<svg style="left:1197.8px;top:341.6px" width="8.6" height="8.6" viewBox="0 0 8.6 8.6" fill="#e6e6e6"><path d="M0 4.3L4.4 0V2.6H8.6V6H4.4V8.6Z"/></svg>
<svg style="left:1353.4px;top:341.6px" width="8.6" height="8.6" viewBox="0 0 8.6 8.6" fill="#e6e6e6"><path d="M8.6 4.3L4.2 0V2.6H0V6H4.2V8.6Z"/></svg>
<div class="t" style="left:1243px;top:340.5px;font-size:8.35px;color:#d8d8d8">Page</div>
<div class="t" style="left:1267.6px;top:340.5px;font-size:8.35px;color:#666;text-shadow:none">1</div>
<div style="left:1265px;top:352.4px;width:23px;height:.8px;background:#636363"></div>
<div class="t" style="left:1294px;top:340.5px;font-size:8.35px;color:#d8d8d8">of 1</div>
<div style="left:1197.8px;top:359.4px;width:165px;height:.9px;background:#464646"></div>
<div class="t b" style="left:1197.4px;top:369.7px;font-size:8.15px;color:#dcdcdc">Strength</div>
<div class="t" style="left:1340.8px;top:368.1px;font-size:8.35px;color:#e0e0e0">64%</div>
<div style="left:1339.3px;top:380.2px;width:23.4px;height:.8px;background:#6e6e6e"></div>
<div style="left:1204px;top:384.2px;width:151.6px;height:2px;background:#6b6b6b;border-radius:1px"></div>
<svg style="left:1297.7px;top:384px" width="9" height="8.4" viewBox="0 0 9 8.4"><path d="M4.5 .2L8.6 5.4Q9 8.2 7 8.2H2Q0 8.2 .4 5.4Z" fill="#f4f4f4" stroke="#3a3a3a" stroke-width=".5"/></svg>
<div class="t b" style="left:1197.4px;top:397.8px;font-size:8.05px;color:#dcdcdc">Eyes</div>
<div class="t" style="left:1233px;top:397.8px;font-size:8.35px;color:#d0d0d0">Left</div>
<div class="t" style="left:1331.2px;top:397.8px;font-size:8.35px;color:#d0d0d0">Right</div>
<div style="left:1194.7px;top:412.9px;width:183.3px;height:19.3px;background:#535353;border-top:.8px solid #444"></div>
<svg style="left:1322.8px;top:417.8px" width="10.6" height="9.4" viewBox="0 0 10.6 9.4" fill="none" stroke="#e6e6e6"><rect x=".5" y=".5" width="9.6" height="8.4" stroke-width="1"/><path d="M5.3 2.2L7.6 3.4V6L5.3 7.2L3 6V3.4ZM3 3.4L5.3 4.6L7.6 3.4M5.3 4.6V7.2" stroke-width=".8" fill="#e6e6e6" fill-opacity=".5"/></svg>
<svg style="left:1346.2px;top:417.4px" width="8" height="10" viewBox="0 0 8 10" fill="none" stroke="#7a7a7a"><path d="M.8 2.4H7.2V9.4H.8ZM0 2.2H8M2.8 2V.6H5.2V2" stroke-width=".9"/><path d="M2.8 3.8V8M5.2 3.8V8" stroke-width=".8"/></svg>
<div style="left:1366.7px;top:128.4px;width:11.3px;height:284.5px;background:#4a4a4a"></div>
<div style="left:1369px;top:131px;width:6.6px;height:181px;background:#696969;border-radius:3.3px"></div>
<div style="left:1194.7px;top:432.2px;width:183.3px;height:2px;background:#3e3e3e"></div>
<div style="left:1194.7px;top:434.2px;width:183.3px;height:21px;background:#424242"></div>
<div style="left:1194.7px;top:434.2px;width:25.4px;height:21px;background:#535353"></div>
<div class="t b" style="left:1201.4px;top:440px;font-size:8.5px;color:#f0f0f0">3D</div>
<div class="t b" style="left:1227.7px;top:440px;font-size:8.1px;color:#cfcfcf;letter-spacing:0">Layers</div>
<div style="left:1259.6px;top:434.2px;width:.8px;height:21px;background:#393939"></div>
<div class="t b" style="left:1267.5px;top:440px;font-size:8.1px;color:#cfcfcf;letter-spacing:0">Channels</div>
<div style="left:1310.4px;top:434.2px;width:.8px;height:21px;background:#393939"></div>
<svg style="left:1364px;top:441.6px" width="9.6" height="6" viewBox="0 0 9.6 6" fill="#c6c6c6"><path d="M0 1.6H3.2L1.6 3.4Z"/><rect x="4" y="0" width="5.6" height="1"/><rect x="4" y="1.7" width="5.6" height="1"/><rect x="4" y="3.4" width="5.6" height="1"/><rect x="4" y="5" width="5.6" height="1"/></svg>
<div style="left:1194.7px;top:455.2px;width:183.3px;height:27.5px;background:#535353"></div>
<div style="left:1194.7px;top:482.7px;width:183.3px;height:303.3px;background:#4a4a4a"></div>
<div style="left:1249.8px;top:461.4px;width:16.8px;height:17px;background:#363636;border-radius:2px;box-shadow:0 0 0 .5px #5c5c5c"></div>
<svg style="left:1253.2px;top:465px" width="10" height="10" viewBox="0 0 10 10" fill="none" stroke="#e6e6e6" stroke-width=".9"><path d="M.6 .8V8.2H3M.6 .8H3M.6 4.6H3"/><rect x="3.2" y="-.2" width="6" height="2.2" fill="#e6e6e6" stroke="none"/><rect x="3.2" y="3.5" width="6" height="2.2" fill="#e6e6e6" stroke="none"/><rect x="3.2" y="7.2" width="6" height="2.2" fill="#e6e6e6" stroke="none"/><path d="M4 .9H8.4M4 4.6H8.4M4 8.3H8.4" stroke="#444" stroke-width=".5"/></svg>
<svg style="left:1272px;top:465px" width="8" height="10" viewBox="0 0 8 10"><path d="M.6 2.2C.6 .2 7.4 .2 7.4 2.2V7.8C7.4 9.8 .6 9.8 .6 7.8Z" fill="#e6e6e6"/><path d="M.6 2.6C2 3.8 6 3.8 7.4 2.6M2.6 4.6V8.6M5.4 4.6V8.6M1 6.6H7" stroke="#4a4a4a" stroke-width=".6" fill="none"/></svg>
<svg style="left:1290px;top:465px" width="10" height="10" viewBox="0 0 10 10" fill="none" stroke="#e6e6e6" stroke-width=".85"><path d="M.8 2H6.2V8.2C6.2 9.2 .8 9.2 .8 8.2Z"/><path d="M.8 2V.8M6.2 2V.8M2.4 3.6V8M4.4 3.6V8M1 5.6H6" stroke-width=".7"/><circle cx="7.6" cy="6.4" r="1.6" fill="#e6e6e6" stroke="none"/><path d="M5.4 9L6.4 7.6" stroke-width=".8"/></svg>
<svg style="left:1309.4px;top:464.6px" width="8" height="11" viewBox="0 0 8 11" fill="#e6e6e6"><path d="M4 0A3.6 3.6 0 0 1 6.2 6.4L5.8 7.8H2.2L1.8 6.4A3.6 3.6 0 0 1 4 0Z"/><rect x="2.4" y="8.3" width="3.2" height="1"/><rect x="2.8" y="9.7" width="2.4" height=".9"/></svg>
<div style="left:1194.7px;top:482px;width:183.3px;height:.9px;background:#474747"></div>
<div style="left:1195px;top:482.7px;width:170.5px;height:14.52px;background:#535353"></div>
<div style="left:1210.2px;top:482.7px;width:.8px;height:14.52px;background:#494949"></div>
<svg style="left:1197.3999999999999px;top:486.40999999999997px" width="10.8" height="6.8" viewBox="0 0 10.8 6.8"><path d="M.2 3.4C2 .6 3.8 0 5.4 0C7 0 8.8 .6 10.6 3.4C8.8 6.2 7 6.8 5.4 6.8C3.8 6.8 2 6.2 .2 3.4Z" fill="#878787"/><circle cx="5.4" cy="3.2" r="2.1" fill="#535353"/><circle cx="6" cy="2.6" r=".7" fill="#878787" opacity=".7"/></svg>
<svg style="left:1212.6px;top:484.40999999999997px" width="10" height="10.8" viewBox="0 0 10 10.8" fill="none" stroke="#e6e6e6" stroke-width=".9"><circle cx="5" cy="3.4" r="1.3" fill="#e6e6e6" stroke="none"/><path d="M5 .2V1.2M2 3.4H3M7 3.4H8M2.8 1.2L3.6 2M7.2 1.2L6.4 2"/><path d="M.6 7.4C2 6 8 6 9.4 7.4C8 8.8 2 8.8 .6 7.4Z" fill="#e6e6e6"/><path d="M2.4 9.6C4 10.4 6 10.4 7.6 9.6"/></svg>
<div class="t" style="left:1228px;top:484.7px;font-size:8.35px;color:#ececec">Environment</div>
<div style="left:1195px;top:498.12px;width:170.5px;height:14.52px;background:#535353"></div>
<div style="left:1210.2px;top:498.12px;width:.8px;height:14.52px;background:#494949"></div>
<svg style="left:1197.3999999999999px;top:501.83px" width="10.8" height="6.8" viewBox="0 0 10.8 6.8"><path d="M.2 3.4C2 .6 3.8 0 5.4 0C7 0 8.8 .6 10.6 3.4C8.8 6.2 7 6.8 5.4 6.8C3.8 6.8 2 6.2 .2 3.4Z" fill="#878787"/><circle cx="5.4" cy="3.2" r="2.1" fill="#535353"/><circle cx="6" cy="2.6" r=".7" fill="#878787" opacity=".7"/></svg>
<svg style="left:1212.8px;top:500.22999999999996px" width="10" height="10" viewBox="0 0 10 10" fill="none" stroke="#e6e6e6" stroke-width=".9"><path d="M.6 .8V8.2H3M.6 .8H3M.6 4.6H3"/><rect x="3.2" y="-.2" width="6" height="2.2" fill="#e6e6e6" stroke="none"/><rect x="3.2" y="3.5" width="6" height="2.2" fill="#e6e6e6" stroke="none"/><rect x="3.2" y="7.2" width="6" height="2.2" fill="#e6e6e6" stroke="none"/><path d="M4 .9H8.4M4 4.6H8.4M4 8.3H8.4" stroke="#444" stroke-width=".5"/></svg>
<div class="t" style="left:1228px;top:500.1px;font-size:8.35px;color:#ececec">Scene</div>
<div style="left:1195px;top:513.54px;width:170.5px;height:14.52px;background:#535353"></div>
<div style="left:1210.2px;top:513.54px;width:.8px;height:14.52px;background:#494949"></div>
<svg style="left:1197.3999999999999px;top:517.25px" width="10.8" height="6.8" viewBox="0 0 10.8 6.8"><path d="M.2 3.4C2 .6 3.8 0 5.4 0C7 0 8.8 .6 10.6 3.4C8.8 6.2 7 6.8 5.4 6.8C3.8 6.8 2 6.2 .2 3.4Z" fill="#878787"/><circle cx="5.4" cy="3.2" r="2.1" fill="#535353"/><circle cx="6" cy="2.6" r=".7" fill="#878787" opacity=".7"/></svg>
<svg style="left:1224.8px;top:517.4499999999999px" width="10.4" height="6.4" viewBox="0 0 10.4 6.4" fill="#e6e6e6"><rect x="0" y="0" width="7" height="6.4" rx=".6"/><path d="M7.2 3.2L10.4 .4V6Z"/></svg>
<div class="t" style="left:1240.2px;top:515.5px;font-size:8.35px;color:#ececec">Current View</div>
<div style="left:1195px;top:528.96px;width:170.5px;height:14.52px;background:#535353"></div>
<div style="left:1210.2px;top:528.96px;width:.8px;height:14.52px;background:#494949"></div>
<svg style="left:1197.3999999999999px;top:532.6700000000001px" width="10.8" height="6.8" viewBox="0 0 10.8 6.8"><path d="M.2 3.4C2 .6 3.8 0 5.4 0C7 0 8.8 .6 10.6 3.4C8.8 6.2 7 6.8 5.4 6.8C3.8 6.8 2 6.2 .2 3.4Z" fill="#f0f0f0"/><circle cx="5.4" cy="3.2" r="2.1" fill="#535353"/><circle cx="6" cy="2.6" r=".7" fill="#f0f0f0" opacity=".7"/></svg>
<svg style="left:1225px;top:531.07px" width="10" height="10" viewBox="-5 -5 10 10" stroke="#e6e6e6" stroke-width=".8"><circle r="1.5" fill="#e6e6e6" stroke="none"/><path d="M0 -4.4V-2.6M0 4.4V2.6M-4.4 0H-2.6M4.4 0H2.6M-3.1 -3.1L-1.9 -1.9M3.1 3.1L1.9 1.9M-3.1 3.1L-1.9 1.9M3.1 -3.1L1.9 -1.9"/><path d="M3 3.4L4.6 4.8" stroke-width="1.1"/></svg>
<div class="t" style="left:1240.2px;top:531.0px;font-size:8.35px;color:#ececec">Infinite Light 1</div>
<div style="left:1195px;top:544.38px;width:170.5px;height:14.52px;background:#535353"></div>
<div style="left:1210.2px;top:544.38px;width:.8px;height:14.52px;background:#494949"></div>
<svg style="left:1197.3999999999999px;top:548.09px" width="10.8" height="6.8" viewBox="0 0 10.8 6.8"><path d="M.2 3.4C2 .6 3.8 0 5.4 0C7 0 8.8 .6 10.6 3.4C8.8 6.2 7 6.8 5.4 6.8C3.8 6.8 2 6.2 .2 3.4Z" fill="#878787"/><circle cx="5.4" cy="3.2" r="2.1" fill="#535353"/><circle cx="6" cy="2.6" r=".7" fill="#878787" opacity=".7"/></svg>
<svg style="left:1224.8px;top:548.29px" width="10.4" height="6.4" viewBox="0 0 10.4 6.4" fill="#e6e6e6"><rect x="0" y="0" width="7" height="6.4" rx=".6"/><path d="M7.2 3.2L10.4 .4V6Z"/></svg>
<div class="t" style="left:1240.2px;top:546.4px;font-size:8.35px;color:#ececec">Default Camera</div>
<div style="left:1195px;top:559.8px;width:170.5px;height:14.52px;background:#535353"></div>
<div style="left:1210.2px;top:559.8px;width:.8px;height:14.52px;background:#494949"></div>
<svg style="left:1197.3999999999999px;top:563.51px" width="10.8" height="6.8" viewBox="0 0 10.8 6.8"><path d="M.2 3.4C2 .6 3.8 0 5.4 0C7 0 8.8 .6 10.6 3.4C8.8 6.2 7 6.8 5.4 6.8C3.8 6.8 2 6.2 .2 3.4Z" fill="#f0f0f0"/><circle cx="5.4" cy="3.2" r="2.1" fill="#535353"/><circle cx="6" cy="2.6" r=".7" fill="#f0f0f0" opacity=".7"/></svg>
<div style="left:1236.2px;top:560.1999999999999px;width:129.3px;height:13.62px;background:#383838"></div>
<svg style="left:1215.8px;top:565.31px" width="5" height="3.2" viewBox="0 0 5 3.2"><path d="M.3 .3L2.5 2.7L4.7 .3" fill="none" stroke="#cfcfcf" stroke-width=".9"/></svg>
<svg style="left:1225.4px;top:562.31px" width="9.4" height="9.4" viewBox="0 0 9.4 9.4"><path d="M2.4 7L7 2.4" stroke="#e6e6e6" stroke-width="1.8"/><circle cx="1.6" cy="6.6" r="1.4" fill="#e6e6e6"/><circle cx="2.8" cy="7.8" r="1.4" fill="#e6e6e6"/><circle cx="6.6" cy="1.6" r="1.4" fill="#e6e6e6"/><circle cx="7.8" cy="2.8" r="1.4" fill="#e6e6e6"/></svg>
<div class="t" style="left:1240.2px;top:561.8px;font-size:8.35px;color:#171717;text-shadow:none">Bottoms_Skeleton</div>
<div style="left:1195px;top:575.22px;width:170.5px;height:14.52px;background:#535353"></div>
<div style="left:1210.2px;top:575.22px;width:.8px;height:14.52px;background:#494949"></div>
<svg style="left:1197.3999999999999px;top:578.9300000000001px" width="10.8" height="6.8" viewBox="0 0 10.8 6.8"><path d="M.2 3.4C2 .6 3.8 0 5.4 0C7 0 8.8 .6 10.6 3.4C8.8 6.2 7 6.8 5.4 6.8C3.8 6.8 2 6.2 .2 3.4Z" fill="#f0f0f0"/><circle cx="5.4" cy="3.2" r="2.1" fill="#535353"/><circle cx="6" cy="2.6" r=".7" fill="#f0f0f0" opacity=".7"/></svg>
<svg style="left:1238px;top:577.33px" width="10" height="10" viewBox="0 0 10 10" fill="none" stroke="#e6e6e6" stroke-width=".85"><path d="M.8 2H6.2V8.2C6.2 9.2 .8 9.2 .8 8.2Z"/><path d="M.8 2V.8M6.2 2V.8M2.4 3.6V8M4.4 3.6V8M1 5.6H6" stroke-width=".7"/><circle cx="7.6" cy="6.4" r="1.6" fill="#e6e6e6" stroke="none"/><path d="M5.4 9L6.4 7.6" stroke-width=".8"/></svg>
<div class="t" style="left:1252.4px;top:577.2px;font-size:8.35px;color:#ececec">Bodymat</div>
<div style="left:1195px;top:590.64px;width:170.5px;height:14.52px;background:#535353"></div>
<div style="left:1210.2px;top:590.64px;width:.8px;height:14.52px;background:#494949"></div>
<svg style="left:1197.3999999999999px;top:594.35px" width="10.8" height="6.8" viewBox="0 0 10.8 6.8"><path d="M.2 3.4C2 .6 3.8 0 5.4 0C7 0 8.8 .6 10.6 3.4C8.8 6.2 7 6.8 5.4 6.8C3.8 6.8 2 6.2 .2 3.4Z" fill="#f0f0f0"/><circle cx="5.4" cy="3.2" r="2.1" fill="#535353"/><circle cx="6" cy="2.6" r=".7" fill="#f0f0f0" opacity=".7"/></svg>
<svg style="left:1238px;top:592.75px" width="10" height="10" viewBox="0 0 10 10" fill="none" stroke="#e6e6e6" stroke-width=".85"><path d="M.8 2H6.2V8.2C6.2 9.2 .8 9.2 .8 8.2Z"/><path d="M.8 2V.8M6.2 2V.8M2.4 3.6V8M4.4 3.6V8M1 5.6H6" stroke-width=".7"/><circle cx="7.6" cy="6.4" r="1.6" fill="#e6e6e6" stroke="none"/><path d="M5.4 9L6.4 7.6" stroke-width=".8"/></svg>
<div class="t" style="left:1252.4px;top:592.6px;font-size:8.35px;color:#ececec">Shoesmat</div>
<div style="left:1195px;top:606.06px;width:170.5px;height:14.52px;background:#535353"></div>
<div style="left:1210.2px;top:606.06px;width:.8px;height:14.52px;background:#494949"></div>
<svg style="left:1197.3999999999999px;top:609.77px" width="10.8" height="6.8" viewBox="0 0 10.8 6.8"><path d="M.2 3.4C2 .6 3.8 0 5.4 0C7 0 8.8 .6 10.6 3.4C8.8 6.2 7 6.8 5.4 6.8C3.8 6.8 2 6.2 .2 3.4Z" fill="#f0f0f0"/><circle cx="5.4" cy="3.2" r="2.1" fill="#535353"/><circle cx="6" cy="2.6" r=".7" fill="#f0f0f0" opacity=".7"/></svg>
<svg style="left:1238px;top:608.17px" width="10" height="10" viewBox="0 0 10 10" fill="none" stroke="#e6e6e6" stroke-width=".85"><path d="M.8 2H6.2V8.2C6.2 9.2 .8 9.2 .8 8.2Z"/><path d="M.8 2V.8M6.2 2V.8M2.4 3.6V8M4.4 3.6V8M1 5.6H6" stroke-width=".7"/><circle cx="7.6" cy="6.4" r="1.6" fill="#e6e6e6" stroke="none"/><path d="M5.4 9L6.4 7.6" stroke-width=".8"/></svg>
<div class="t" style="left:1252.4px;top:608.1px;font-size:8.35px;color:#ececec">Topmat</div>
<div style="left:1195px;top:621.48px;width:170.5px;height:14.52px;background:#535353"></div>
<div style="left:1210.2px;top:621.48px;width:.8px;height:14.52px;background:#494949"></div>
<svg style="left:1197.3999999999999px;top:625.19px" width="10.8" height="6.8" viewBox="0 0 10.8 6.8"><path d="M.2 3.4C2 .6 3.8 0 5.4 0C7 0 8.8 .6 10.6 3.4C8.8 6.2 7 6.8 5.4 6.8C3.8 6.8 2 6.2 .2 3.4Z" fill="#f0f0f0"/><circle cx="5.4" cy="3.2" r="2.1" fill="#535353"/><circle cx="6" cy="2.6" r=".7" fill="#f0f0f0" opacity=".7"/></svg>
<svg style="left:1238px;top:623.59px" width="10" height="10" viewBox="0 0 10 10" fill="none" stroke="#e6e6e6" stroke-width=".85"><path d="M.8 2H6.2V8.2C6.2 9.2 .8 9.2 .8 8.2Z"/><path d="M.8 2V.8M6.2 2V.8M2.4 3.6V8M4.4 3.6V8M1 5.6H6" stroke-width=".7"/><circle cx="7.6" cy="6.4" r="1.6" fill="#e6e6e6" stroke="none"/><path d="M5.4 9L6.4 7.6" stroke-width=".8"/></svg>
<div class="t" style="left:1252.4px;top:623.5px;font-size:8.35px;color:#ececec">Bottommat</div>
<div style="left:1194.7px;top:766.2px;width:183.3px;height:19.8px;background:#535353;border-top:.8px solid #444"></div>
<div style="left:1366.3px;top:482.7px;width:11.7px;height:283.5px;background:#474747"></div>
<svg style="left:1238.6px;top:770.8px" width="8" height="10" viewBox="0 0 8 10"><path d="M.6 2.2C.6 .2 7.4 .2 7.4 2.2V7.8C7.4 9.8 .6 9.8 .6 7.8Z" fill="#e6e6e6"/><path d="M.6 2.6C2 3.8 6 3.8 7.4 2.6M2.6 4.6V8.6M5.4 4.6V8.6M1 6.6H7" stroke="#4a4a4a" stroke-width=".6" fill="none"/></svg>
<svg style="left:1248.6px;top:781.4px" width="2.4" height="1.6" viewBox="0 0 2.4 1.6"><path d="M0 0H2.4L1.2 1.6Z" fill="#ddd"/></svg>
<svg style="left:1260px;top:770.2px" width="8" height="11" viewBox="0 0 8 11" fill="#e6e6e6"><path d="M4 0A3.6 3.6 0 0 1 6.2 6.4L5.8 7.8H2.2L1.8 6.4A3.6 3.6 0 0 1 4 0Z"/><rect x="2.4" y="8.3" width="3.2" height="1"/><rect x="2.8" y="9.7" width="2.4" height=".9"/></svg>
<svg style="left:1271px;top:781.4px" width="2.4" height="1.6" viewBox="0 0 2.4 1.6"><path d="M0 0H2.4L1.2 1.6Z" fill="#ddd"/></svg>
<svg style="left:1281.4px;top:771.2px" width="10.6" height="9.4" viewBox="0 0 10.6 9.4" fill="none" stroke="#e6e6e6"><rect x=".5" y=".5" width="9.6" height="8.4" stroke-width="1"/><path d="M5.3 2.2L7.6 3.4V6L5.3 7.2L3 6V3.4ZM3 3.4L5.3 4.6L7.6 3.4M5.3 4.6V7.2" stroke-width=".8" fill="#e6e6e6" fill-opacity=".5"/></svg>
<svg style="left:1303.4px;top:770.6px" width="10.6" height="10.4" viewBox="0 0 10.6 10.4" fill="#e6e6e6"><rect x="4.4" y="0" width="2" height="2.4"/><rect x="5" y="2.4" width=".9" height="4.6"/><rect x="2.6" y="7" width="5.6" height="1.4"/><rect x="0" y="9.4" width="10.6" height="1"/></svg>
<svg style="left:1326px;top:770.6px" width="11.6" height="10.4" viewBox="0 0 11.6 10.4" fill="#7a7a7a"><rect x="3.4" y="0" width="2" height="2.4"/><rect x="4" y="2.4" width=".9" height="4.6"/><rect x="1.6" y="7" width="5.6" height="1.4"/><rect x="0" y="9.4" width="7" height="1"/><circle cx="9.6" cy="8.4" r="1.6" fill="none" stroke="#7a7a7a" stroke-width=".8"/></svg>
<svg style="left:1349px;top:770.8px" width="8" height="10" viewBox="0 0 8 10" fill="none" stroke="#7a7a7a"><path d="M.8 2.4H7.2V9.4H.8ZM0 2.2H8M2.8 2V.6H5.2V2" stroke-width=".9"/><path d="M2.8 3.8V8M5.2 3.8V8" stroke-width=".8"/></svg>
<!--/RIGHT-->
</div>
</div>
</div>
</body>
</html>
